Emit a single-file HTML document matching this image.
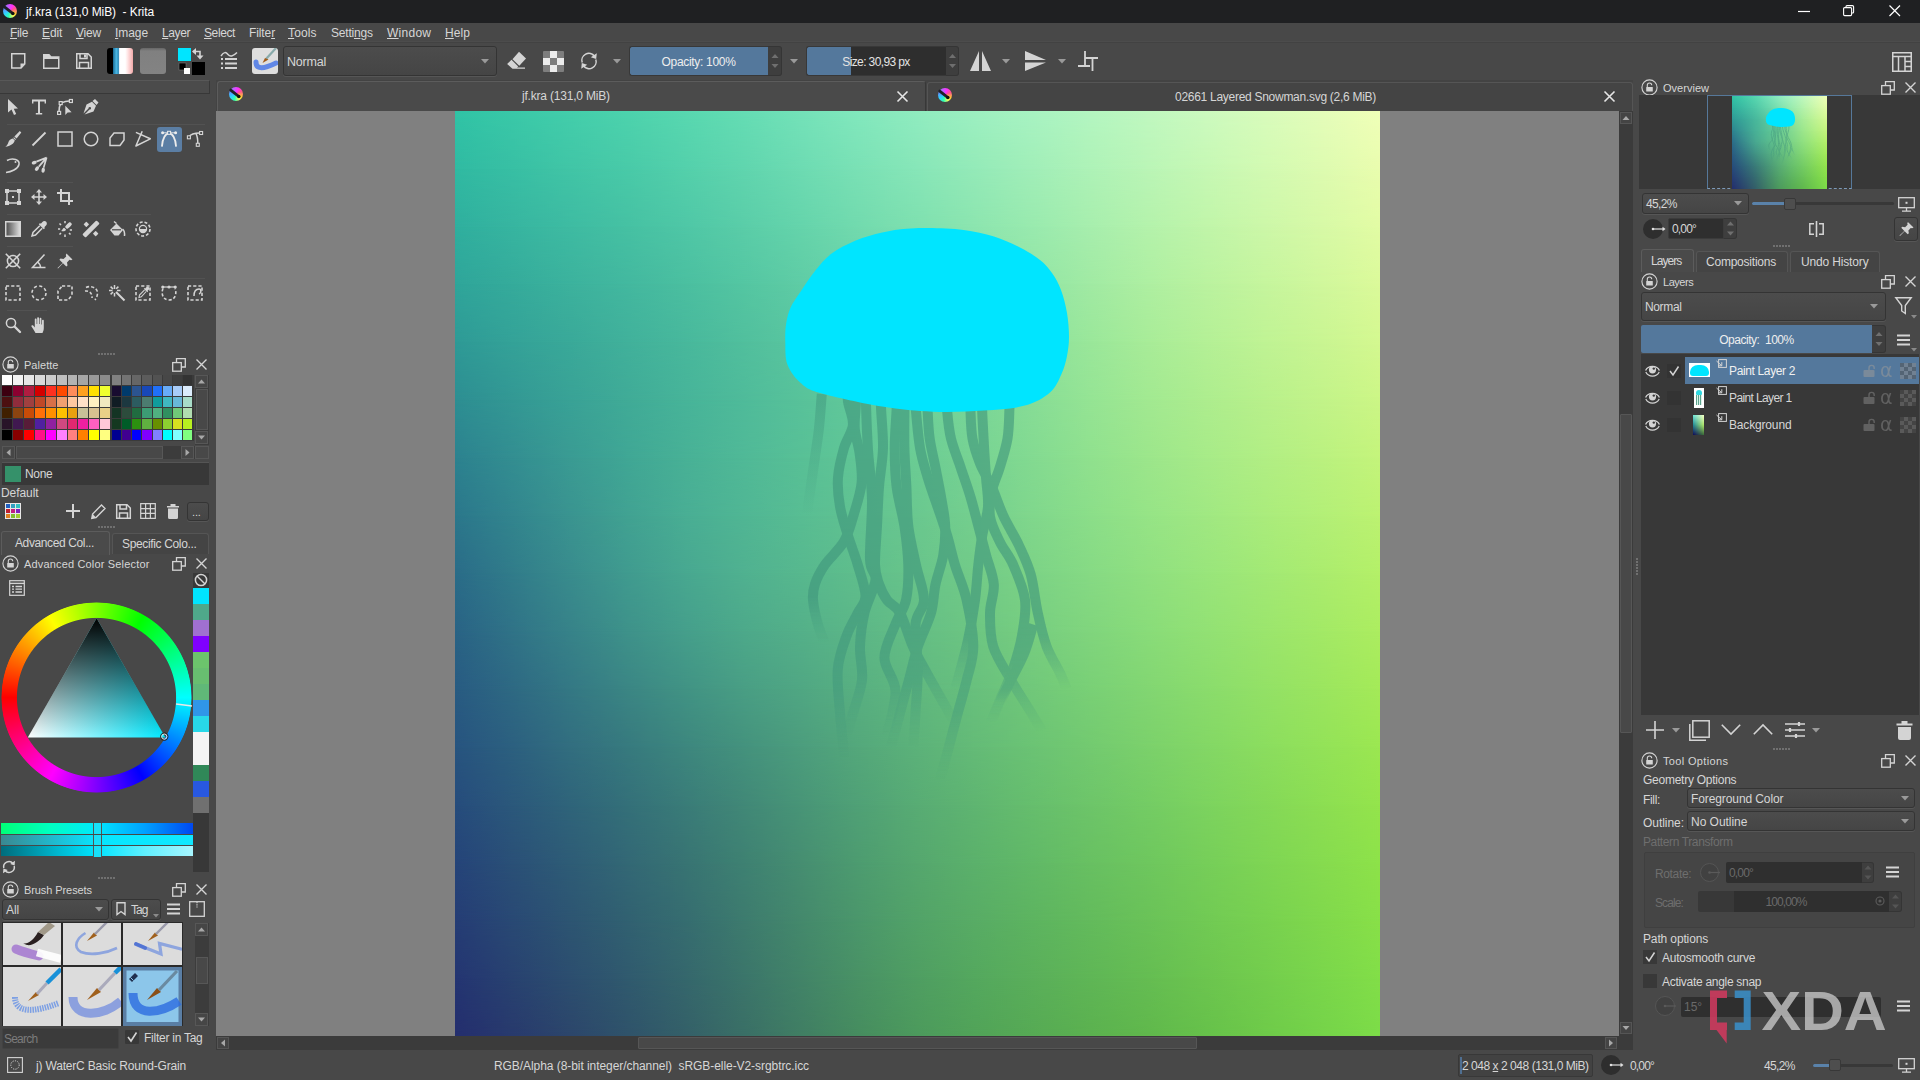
<!DOCTYPE html><html><head><meta charset="utf-8"><title>jf.kra (131,0 MiB) - Krita</title><style>
*{box-sizing:border-box;margin:0;padding:0}
html,body{width:1920px;height:1080px;overflow:hidden;background:#484848}
body{position:relative;font-family:"Liberation Sans",sans-serif;font-size:12px;color:#d6d6d6;letter-spacing:-0.15px}
.a{position:absolute}
.t{position:absolute;white-space:nowrap;line-height:14px}
u{text-decoration:underline;text-underline-offset:1px}
svg{position:absolute;overflow:visible}
.in{position:absolute;background:#2f2f2f;border:1px solid #3b3b3b;border-radius:2px}
.cb{position:absolute;background:linear-gradient(#4c4c4c,#454545);border:1px solid #343434;border-radius:3px;box-shadow:0 1px 0 #565656}
.dim{color:#7a7a7a}
.s{fill:none;stroke:#d4d4d4;stroke-width:1.5}
.f{fill:#d4d4d4;stroke:none}
</style></head><body>
<div class="a" style="left:0px;top:0px;width:1920px;height:23px;background:#1f2022;"></div>
<div class="a" style="left:3px;top:4px;width:14px;height:14px;border-radius:50%;background:conic-gradient(from 20deg,#ff30ff,#ff5090 12%,#ffd030 28%,#f0ff60 36%,#30ffb0 48%,#30d0ff 62%,#6090ff 75%,#c060ff 88%,#ff30ff)"></div>
<svg style="left:3px;top:4px;" width="14" height="14" viewBox="0 0 14 14"><path d="M1.7 3.1 L8.7 8.7" stroke="#202028" stroke-width="2.8" stroke-linecap="round"/><circle cx="9.8" cy="9.5" r="1.8" fill="#111"/></svg>
<div class="t" style="left:26px;top:5px;color:#fff;;letter-spacing:-0.075px;">jf.kra (131,0 MiB)&nbsp; - Krita</div>
<svg style="left:1798px;top:4px;" width="14" height="14" viewBox="0 0 14 14"><path d="M0 7.5 H12" stroke="#fff" stroke-width="1.2"/></svg>
<svg style="left:1843px;top:5px;" width="12" height="12" viewBox="0 0 12 12"><rect x="0.6" y="2.6" width="8" height="8" rx="1" fill="none" stroke="#fff" stroke-width="1.1"/><path d="M3 2.4 V1.6 Q3 0.6 4 0.6 H9.4 Q10.6 0.6 10.6 1.8 V7 Q10.6 8 9.6 8 H9" fill="none" stroke="#fff" stroke-width="1.1"/></svg>
<svg style="left:1889px;top:5px;" width="12" height="12" viewBox="0 0 12 12"><path d="M0.5 0.5 L11 11 M11 0.5 L0.5 11" stroke="#fff" stroke-width="1.2" fill="none"/></svg>
<div class="t" style="left:10px;top:26px;;letter-spacing:-0.340px;"><u>F</u>ile</div>
<div class="t" style="left:42px;top:26px;;letter-spacing:-0.101px;"><u>E</u>dit</div>
<div class="t" style="left:76px;top:26px;;letter-spacing:-0.203px;"><u>V</u>iew</div>
<div class="t" style="left:115px;top:26px;;letter-spacing:-0.075px;"><u>I</u>mage</div>
<div class="t" style="left:162px;top:26px;;letter-spacing:-0.406px;"><u>L</u>ayer</div>
<div class="t" style="left:204px;top:26px;;letter-spacing:-0.396px;"><u>S</u>elect</div>
<div class="t" style="left:249px;top:26px;;letter-spacing:-0.112px;">Filte<u>r</u></div>
<div class="t" style="left:288px;top:26px;;letter-spacing:0.137px;"><u>T</u>ools</div>
<div class="t" style="left:331px;top:26px;;letter-spacing:-0.211px;">Setti<u>n</u>gs</div>
<div class="t" style="left:387px;top:26px;;letter-spacing:0.269px;"><u>W</u>indow</div>
<div class="t" style="left:445px;top:26px;;letter-spacing:0.078px;"><u>H</u>elp</div>
<svg style="left:11px;top:53px;" width="15" height="16" viewBox="0 0 15 16"><path class="s" d="M0.75 0.75 H13.75 V11 L10 15 H0.75 Z"/><path class="f" d="M9.5 10.5 H14 L9.5 15.2Z"/></svg>
<svg style="left:43px;top:54px;" width="17" height="15" viewBox="0 0 17 15"><path class="s" d="M0.75 14.25 V0.75 H6 L8 3 H15.75 V14.25 Z"/><path class="f" d="M0.75 0.75 H6 L8 3 H15.75 V5 H0.75Z"/></svg>
<svg style="left:76px;top:53px;" width="16" height="16" viewBox="0 0 16 16"><path class="s" d="M0.75 0.75 H12 L15.25 4 V15.25 H0.75 Z"/><path class="s" d="M4 0.75 V5.5 H11 V0.75 M3.5 15 V9.5 H12.5 V15"/><rect class="f" x="8" y="1.5" width="2" height="3"/></svg>
<div class="a" style="left:107px;top:48px;width:26px;height:26px;background:linear-gradient(90deg,#000 0,#000 22%,#1d6f9a 24%,#49b6e2 36%,#2f8dbb 44%,#e8f2fa 48%,#fff 52%,#fff 70%,#ffe4e4 80%,#f2a8a8 100%);border-radius:3px"></div>
<div class="a" style="left:140px;top:48px;width:26px;height:26px;background:#7f7f7f;border-radius:3px;background-image:linear-gradient(#666 0,#808080 3px,#838383 100%)"></div>
<div class="a" style="left:178px;top:48px;width:13px;height:13px;background:#00e5ff;"></div>
<div class="a" style="left:192px;top:62px;width:13px;height:13px;background:#000;"></div>
<svg style="left:179px;top:63px;" width="12" height="12" viewBox="0 0 12 12"><rect x="0" y="0" width="7" height="7" fill="#000" stroke="#777" stroke-width="0.6"/><rect x="5" y="5" width="6" height="6" fill="#fff"/></svg>
<svg style="left:192px;top:48px;" width="12" height="12" viewBox="0 0 12 12"><path d="M1 3.5 H8 V8" fill="none" stroke="#d4d4d4" stroke-width="1.6"/><path class="f" d="M4 0 L0 3.5 L4 7Z"/><path class="f" d="M4.5 7.5 H11.5 L8 11.5Z"/></svg>
<svg style="left:220px;top:52px;top:51px" width="18" height="18" viewBox="0 0 18 18"><path class="s" d="M1 5 C4 0.5 6 1 8 3.5 S13 5.5 17 1.5" stroke-width="1.8"/><path d="M5 8 H17 M5 12.5 H17 M5 17 H17" stroke="#d4d4d4" stroke-width="1.8"/><path d="M1 8 H3 M1 12.5 H3 M1 17 H3" stroke="#d4d4d4" stroke-width="1.8"/></svg>
<div class="a" style="left:252px;top:48px;width:26px;height:26px;background:#dedede;border-radius:3px;overflow:hidden"><svg style="left:0;top:0" width="26" height="26" viewBox="0 0 26 26"><path d="M4 14 C4 22 12 21 24 15" fill="none" stroke="#4a78e8" stroke-width="5" stroke-linecap="round" opacity=".85"/><path d="M14 11 L24 0" stroke="#8aa" stroke-width="2.2"/><path d="M10.5 15 L13 10 L16.5 11.5 Z" fill="#a05a18"/></svg></div>
<div class="cb" style="left:283px;top:46px;width:214px;height:30px;"></div>
<div class="t" style="left:287px;top:55px;font-size:12.5px;letter-spacing:-0.183px;">Normal</div>
<svg style="left:481px;top:59px;" width="8" height="5" viewBox="0 0 8 5"><path d="M0 0 H8 L4 4.5Z" fill="#9a9a9a"/></svg>
<svg style="left:507px;top:51px;" width="20" height="19" viewBox="0 0 20 19"><path class="f" d="M12 0.8 L19 7.6 L12.3 14.7 L5.5 8.2Z"/><path class="f" d="M3.2 10 L0.1 13 L5.5 17.7 H18 V16.5 H10 L11.2 15.6 L4.5 8.8Z"/></svg>
<div class="a" style="left:543px;top:51px;width:21px;height:21px;background:#7e7e7e;border-radius:1px"></div>
<div class="a" style="left:543px;top:58px;width:7px;height:7px;background:#ececec;"></div>
<div class="a" style="left:550px;top:51px;width:7px;height:7px;background:#ececec;"></div>
<div class="a" style="left:550px;top:65px;width:7px;height:7px;background:#ececec;"></div>
<div class="a" style="left:557px;top:58px;width:7px;height:7px;background:#ececec;"></div>
<svg style="left:580px;top:52px;" width="18" height="18" viewBox="0 0 18 18"><path class="s" d="M2.2 10.5 A7 7 0 0 1 14.5 4.2 M15.8 7.5 A7 7 0 0 1 3.5 13.8" stroke-width="1.7"/><path class="f" d="M16.8 1.2 L16.2 7 L10.8 5.2Z M1.2 16.8 L1.8 11 L7.2 12.8Z"/></svg>
<svg style="left:613px;top:59px;" width="8" height="5" viewBox="0 0 8 5"><path d="M0 0 H8 L4 4.5Z" fill="#9a9a9a"/></svg>
<div class="a" style="left:629px;top:46px;width:139px;height:30px;background:#54789c;border:1px solid #383838;border-right:none;border-radius:3px 0 0 3px"></div>
<div class="t" style="left:629px;top:55px;width:139px;text-align:center;color:#eee;letter-spacing:-0.311px;">Opacity: 100%</div>
<div class="a" style="left:768px;top:46px;width:14px;height:30px;background:#3e3e3e;border:1px solid #353535;border-left:none;border-radius:0 3px 3px 0"></div>
<svg style="left:768px;top:46px;" width="14" height="30" viewBox="0 0 14 30"><path d="M3.5 12.0 H10.5 L7.0 8.0Z M3.5 18.0 H10.5 L7.0 22.0Z" fill="#6f6f6f"/></svg>
<svg style="left:790px;top:59px;" width="8" height="5" viewBox="0 0 8 5"><path d="M0 0 H8 L4 4.5Z" fill="#9a9a9a"/></svg>
<div class="a" style="left:806px;top:46px;width:140px;height:30px;background:linear-gradient(90deg,#54789c 0,#54789c 44px,#2e2e2e 44px);border:1px solid #383838;border-right:none;border-radius:3px 0 0 3px"></div>
<div class="t" style="left:806px;top:55px;width:140px;text-align:center;color:#e4e4e4;letter-spacing:-0.612px;">Size: 30,93 px</div>
<div class="a" style="left:946px;top:46px;width:13px;height:30px;background:#3e3e3e;border:1px solid #353535;border-left:none;border-radius:0 3px 3px 0"></div>
<svg style="left:946px;top:46px;" width="13" height="30" viewBox="0 0 13 30"><path d="M3.0 12.0 H10.0 L6.5 8.0Z M3.0 18.0 H10.0 L6.5 22.0Z" fill="#6f6f6f"/></svg>
<svg style="left:970px;top:51px;" width="21" height="20" viewBox="0 0 21 20"><path class="f" d="M9 0 V20 H0Z M12 0 V20 H21Z"/></svg>
<svg style="left:1002px;top:59px;" width="8" height="5" viewBox="0 0 8 5"><path d="M0 0 H8 L4 4.5Z" fill="#9a9a9a"/></svg>
<svg style="left:1025px;top:51px;" width="21" height="20" viewBox="0 0 21 20"><path class="f" d="M0 0 V9 H21Z M0 20 V11.5 H21Z"/></svg>
<svg style="left:1058px;top:59px;" width="8" height="5" viewBox="0 0 8 5"><path d="M0 0 H8 L4 4.5Z" fill="#9a9a9a"/></svg>
<svg style="left:1078px;top:52px;" width="20" height="19" viewBox="0 0 20 19"><path d="M7 -1 V14.8 M6.1 6 H20 M0 14 H12 M14.5 6 V19" fill="none" stroke="#d4d4d4" stroke-width="1.8"/></svg>
<svg style="left:1892px;top:52px;" width="20" height="20" viewBox="0 0 20 20"><rect class="s" x="0.75" y="0.75" width="18.5" height="18.5"/><path class="s" d="M0.75 4.5 H19.25 M6.5 4.5 V19.25 M13 4.5 V19.25 M13 9.5 H19.25 M13 14.5 H19.25" stroke-width="1.3"/></svg>
<div class="a" style="left:0px;top:41px;width:1920px;height:1px;background:#4c4c4c;"></div>
<div class="a" style="left:0px;top:42px;width:1920px;height:1px;background:#424242;"></div>
<div class="a" style="left:216px;top:80px;width:1417px;height:31px;background:#434343;"></div>
<div class="a" style="left:217px;top:81px;width:709px;height:30px;background:#4a4a4a;border:1px solid #5c5c5c;border-bottom:none;border-right-color:#383838;border-radius:3px 3px 0 0"></div>
<div class="a" style="left:229px;top:87px;width:14px;height:14px;border-radius:50%;background:conic-gradient(from 20deg,#ff30ff,#ff5090 12%,#ffd030 28%,#f0ff60 36%,#30ffb0 48%,#30d0ff 62%,#6090ff 75%,#c060ff 88%,#ff30ff)"></div>
<svg style="left:229px;top:87px;" width="14" height="14" viewBox="0 0 14 14"><path d="M1.7 3.1 L8.7 8.7" stroke="#202028" stroke-width="2.8" stroke-linecap="round"/><circle cx="9.8" cy="9.5" r="1.8" fill="#111"/></svg>
<div class="t" style="left:522px;top:89px;;letter-spacing:-0.198px;">jf.kra (131,0 MiB)</div>
<svg style="left:897px;top:91px;" width="11" height="11" viewBox="0 0 11 11"><path d="M0.5 0.5 L10.5 10.5 M10.5 0.5 L0.5 10.5" stroke="#e6e6e6" stroke-width="1.6" fill="none"/></svg>
<div class="a" style="left:927px;top:82px;width:706px;height:29px;background:#444;border:1px solid #555;border-bottom:none;border-radius:3px 3px 0 0"></div>
<div class="a" style="left:938px;top:88px;width:14px;height:14px;border-radius:50%;background:conic-gradient(from 20deg,#ff30ff,#ff5090 12%,#ffd030 28%,#f0ff60 36%,#30ffb0 48%,#30d0ff 62%,#6090ff 75%,#c060ff 88%,#ff30ff)"></div>
<svg style="left:938px;top:88px;" width="14" height="14" viewBox="0 0 14 14"><path d="M1.7 3.1 L8.7 8.7" stroke="#202028" stroke-width="2.8" stroke-linecap="round"/><circle cx="9.8" cy="9.5" r="1.8" fill="#111"/></svg>
<div class="t" style="left:1175px;top:90px;;letter-spacing:-0.279px;">02661 Layered Snowman.svg (2,6 MiB)</div>
<svg style="left:1604px;top:91px;" width="11" height="11" viewBox="0 0 11 11"><path d="M0.5 0.5 L10.5 10.5 M10.5 0.5 L0.5 10.5" stroke="#e6e6e6" stroke-width="1.6" fill="none"/></svg>
<div class="a" style="left:216px;top:111px;width:1404px;height:925px;background:#808080;"></div>
<div class="a" style="left:455px;top:111px;width:925px;height:925px;overflow:hidden">
<div class="a" style="left:0;top:0px;width:925px;height:58px;background:linear-gradient(90deg,#30c4a6,#3ac9a8,#43ceab,#4dd3ad,#58d8b0,#65ddb4,#74e2b9,#82e8bd,#90ecc0,#9df0c1,#a8f3c2,#b4f6c1,#c0f8c0,#ccfabf,#d8fcbc,#e4fdba,#f0ffb8)"></div>
<div class="a" style="left:0;top:0px;width:925px;height:58px;background:linear-gradient(90deg,#30baa2,#38bfa4,#41c5a6,#49caa8,#54d0ab,#60d5ae,#6ddbb2,#7ae1b5,#87e6b8,#94eab8,#a1eeb8,#aef2b7,#baf5b6,#c6f8b4,#d2fab2,#ddfbb0,#e9fdae);-webkit-mask-image:linear-gradient(to bottom,transparent,#000);mask-image:linear-gradient(to bottom,transparent,#000)"></div>
<div class="a" style="left:0;top:58px;width:925px;height:58px;background:linear-gradient(90deg,#30baa2,#38bfa4,#41c5a6,#49caa8,#54d0ab,#60d5ae,#6ddbb2,#7ae1b5,#87e6b8,#94eab8,#a1eeb8,#aef2b7,#baf5b6,#c6f8b4,#d2fab2,#ddfbb0,#e9fdae)"></div>
<div class="a" style="left:0;top:58px;width:925px;height:58px;background:linear-gradient(90deg,#2faf9e,#37b5a0,#3ebba2,#46c1a3,#4fc7a6,#5acda8,#65d4ab,#72daae,#7ee0af,#8ce5af,#99eaae,#a7eead,#b4f2ab,#c0f5a9,#ccf7a8,#d7f9a6,#e2fca4);-webkit-mask-image:linear-gradient(to bottom,transparent,#000);mask-image:linear-gradient(to bottom,transparent,#000)"></div>
<div class="a" style="left:0;top:116px;width:925px;height:57px;background:linear-gradient(90deg,#2faf9e,#37b5a0,#3ebba2,#46c1a3,#4fc7a6,#5acda8,#65d4ab,#72daae,#7ee0af,#8ce5af,#99eaae,#a7eead,#b4f2ab,#c0f5a9,#ccf7a8,#d7f9a6,#e2fca4)"></div>
<div class="a" style="left:0;top:116px;width:925px;height:57px;background:linear-gradient(90deg,#2fa59a,#35ab9b,#3cb29d,#43b89f,#4bbfa0,#54c6a2,#5fcca5,#6ad3a7,#76d9a7,#84dfa7,#92e5a5,#a1eaa3,#aeefa1,#baf29f,#c5f59d,#d0f79c,#dbfa9a);-webkit-mask-image:linear-gradient(to bottom,transparent,#000);mask-image:linear-gradient(to bottom,transparent,#000)"></div>
<div class="a" style="left:0;top:173px;width:925px;height:58px;background:linear-gradient(90deg,#2fa59a,#35ab9b,#3cb29d,#43b89f,#4bbfa0,#54c6a2,#5fcca5,#6ad3a7,#76d9a7,#84dfa7,#92e5a5,#a1eaa3,#aeefa1,#baf29f,#c5f59d,#d0f79c,#dbfa9a)"></div>
<div class="a" style="left:0;top:173px;width:925px;height:58px;background:linear-gradient(90deg,#2e9a96,#34a298,#3aa999,#41b19b,#48b89c,#51bf9d,#5ac69f,#65cda0,#70d4a0,#7ddb9f,#8ce19d,#9ae79a,#a8ec98,#b4f096,#bff394,#c9f592,#d4f890);-webkit-mask-image:linear-gradient(to bottom,transparent,#000);mask-image:linear-gradient(to bottom,transparent,#000)"></div>
<div class="a" style="left:0;top:231px;width:925px;height:58px;background:linear-gradient(90deg,#2e9a96,#34a298,#3aa999,#41b19b,#48b89c,#51bf9d,#5ac69f,#65cda0,#70d4a0,#7ddb9f,#8ce19d,#9ae79a,#a8ec98,#b4f096,#bff394,#c9f592,#d4f890)"></div>
<div class="a" style="left:0;top:231px;width:925px;height:58px;background:linear-gradient(90deg,#2d8e92,#339894,#39a296,#40ab97,#47b499,#4fbb9a,#58c29a,#62c99a,#6cd09a,#79d698,#87dd96,#95e494,#a2e991,#aded8e,#b8f08b,#c2f389,#ccf686);-webkit-mask-image:linear-gradient(to bottom,transparent,#000);mask-image:linear-gradient(to bottom,transparent,#000)"></div>
<div class="a" style="left:0;top:289px;width:925px;height:58px;background:linear-gradient(90deg,#2d8e92,#339894,#39a296,#40ab97,#47b499,#4fbb9a,#58c29a,#62c99a,#6cd09a,#79d698,#87dd96,#95e494,#a2e991,#aded8e,#b8f08b,#c2f389,#ccf686)"></div>
<div class="a" style="left:0;top:289px;width:925px;height:58px;background:linear-gradient(90deg,#2c828f,#338e91,#3a9b93,#40a795,#48b196,#50b997,#58c096,#61c696,#6bcc94,#77d393,#83da91,#90e18e,#9ce68b,#a7eb88,#b1ee84,#baf17f,#c4f47b);-webkit-mask-image:linear-gradient(to bottom,transparent,#000);mask-image:linear-gradient(to bottom,transparent,#000)"></div>
<div class="a" style="left:0;top:347px;width:925px;height:58px;background:linear-gradient(90deg,#2c828f,#338e91,#3a9b93,#40a795,#48b196,#50b997,#58c096,#61c696,#6bcc94,#77d393,#83da91,#90e18e,#9ce68b,#a7eb88,#b1ee84,#baf17f,#c4f47b)"></div>
<div class="a" style="left:0;top:347px;width:925px;height:58px;background:linear-gradient(90deg,#2b778b,#32858e,#3a9490,#41a292,#49ae94,#50b694,#58bd93,#61c291,#6ac88f,#74cf8e,#80d78c,#8bde89,#96e486,#a0e882,#aaec7c,#b3ef77,#bcf271);-webkit-mask-image:linear-gradient(to bottom,transparent,#000);mask-image:linear-gradient(to bottom,transparent,#000)"></div>
<div class="a" style="left:0;top:405px;width:925px;height:57px;background:linear-gradient(90deg,#2b778b,#32858e,#3a9490,#41a292,#49ae94,#50b694,#58bd93,#61c291,#6ac88f,#74cf8e,#80d78c,#8bde89,#96e486,#a0e882,#aaec7c,#b3ef77,#bcf271)"></div>
<div class="a" style="left:0;top:405px;width:925px;height:57px;background:linear-gradient(90deg,#2a6c88,#317c8a,#398c8d,#409b8f,#48a890,#50b190,#57b88e,#5fbe8c,#68c48a,#72cb88,#7cd386,#86da84,#90e080,#99e57b,#a2e975,#abec6e,#b4f068);-webkit-mask-image:linear-gradient(to bottom,transparent,#000);mask-image:linear-gradient(to bottom,transparent,#000)"></div>
<div class="a" style="left:0;top:462px;width:925px;height:58px;background:linear-gradient(90deg,#2a6c88,#317c8a,#398c8d,#409b8f,#48a890,#50b190,#57b88e,#5fbe8c,#68c48a,#72cb88,#7cd386,#86da84,#90e080,#99e57b,#a2e975,#abec6e,#b4f068)"></div>
<div class="a" style="left:0;top:462px;width:925px;height:58px;background:linear-gradient(90deg,#296385,#307387,#378389,#3e928a,#459f8b,#4da98a,#54b089,#5cb787,#64be85,#6dc682,#77ce80,#80d57d,#89dc79,#92e174,#9be56d,#a3e966,#aced60);-webkit-mask-image:linear-gradient(to bottom,transparent,#000);mask-image:linear-gradient(to bottom,transparent,#000)"></div>
<div class="a" style="left:0;top:520px;width:925px;height:58px;background:linear-gradient(90deg,#296385,#307387,#378389,#3e928a,#459f8b,#4da98a,#54b089,#5cb787,#64be85,#6dc682,#77ce80,#80d57d,#89dc79,#92e174,#9be56d,#a3e966,#aced60)"></div>
<div class="a" style="left:0;top:520px;width:925px;height:58px;background:linear-gradient(90deg,#285b82,#2e6983,#347884,#3b8684,#419384,#499e84,#50a783,#58b081,#60b87f,#68c07d,#71c87a,#79d076,#82d672,#8adc6c,#93e166,#9be55f,#a4ea58);-webkit-mask-image:linear-gradient(to bottom,transparent,#000);mask-image:linear-gradient(to bottom,transparent,#000)"></div>
<div class="a" style="left:0;top:578px;width:925px;height:58px;background:linear-gradient(90deg,#285b82,#2e6983,#347884,#3b8684,#419384,#499e84,#50a783,#58b081,#60b87f,#68c07d,#71c87a,#79d076,#82d672,#8adc6c,#93e166,#9be55f,#a4ea58)"></div>
<div class="a" style="left:0;top:578px;width:925px;height:58px;background:linear-gradient(90deg,#27547f,#2c607f,#326e7f,#377a7e,#3d877e,#44927d,#4c9d7d,#54a87b,#5cb27a,#64bb77,#6bc374,#73ca70,#7bd16b,#83d765,#8bdd5f,#93e258,#9be751);-webkit-mask-image:linear-gradient(to bottom,transparent,#000);mask-image:linear-gradient(to bottom,transparent,#000)"></div>
<div class="a" style="left:0;top:636px;width:925px;height:58px;background:linear-gradient(90deg,#27547f,#2c607f,#326e7f,#377a7e,#3d877e,#44927d,#4c9d7d,#54a87b,#5cb27a,#64bb77,#6bc374,#73ca70,#7bd16b,#83d765,#8bdd5f,#93e258,#9be751)"></div>
<div class="a" style="left:0;top:636px;width:925px;height:58px;background:linear-gradient(90deg,#264c7c,#2b587b,#2f647a,#347079,#3a7c78,#418877,#489577,#50a176,#58ac74,#5fb571,#66be6d,#6dc569,#74cc64,#7cd35f,#84d858,#8cde52,#94e44c);-webkit-mask-image:linear-gradient(to bottom,transparent,#000);mask-image:linear-gradient(to bottom,transparent,#000)"></div>
<div class="a" style="left:0;top:694px;width:925px;height:58px;background:linear-gradient(90deg,#264c7c,#2b587b,#2f647a,#347079,#3a7c78,#418877,#489577,#50a176,#58ac74,#5fb571,#66be6d,#6dc569,#74cc64,#7cd35f,#84d858,#8cde52,#94e44c)"></div>
<div class="a" style="left:0;top:694px;width:925px;height:58px;background:linear-gradient(90deg,#254479,#2a5077,#2e5c76,#336875,#387473,#3e8172,#468e71,#4d9c70,#55a76e,#5bb16b,#61b967,#68c062,#6ec75e,#76ce59,#7ed554,#86db4f,#8de249);-webkit-mask-image:linear-gradient(to bottom,transparent,#000);mask-image:linear-gradient(to bottom,transparent,#000)"></div>
<div class="a" style="left:0;top:752px;width:925px;height:57px;background:linear-gradient(90deg,#254479,#2a5077,#2e5c76,#336875,#387473,#3e8172,#468e71,#4d9c70,#55a76e,#5bb16b,#61b967,#68c062,#6ec75e,#76ce59,#7ed554,#86db4f,#8de249)"></div>
<div class="a" style="left:0;top:752px;width:925px;height:57px;background:linear-gradient(90deg,#253d75,#294974,#2d5572,#316171,#366d70,#3d7b6e,#44896c,#4b976b,#52a368,#58ac65,#5db460,#63bb5c,#6ac258,#71ca54,#78d150,#80d84c,#88e048);-webkit-mask-image:linear-gradient(to bottom,transparent,#000);mask-image:linear-gradient(to bottom,transparent,#000)"></div>
<div class="a" style="left:0;top:809px;width:925px;height:58px;background:linear-gradient(90deg,#253d75,#294974,#2d5572,#316171,#366d70,#3d7b6e,#44896c,#4b976b,#52a368,#58ac65,#5db460,#63bb5c,#6ac258,#71ca54,#78d150,#80d84c,#88e048)"></div>
<div class="a" style="left:0;top:809px;width:925px;height:58px;background:linear-gradient(90deg,#243572,#284270,#2c4e6f,#305a6e,#35676c,#3b756a,#428468,#499265,#4f9e62,#54a85e,#5aaf5a,#5fb656,#65bd52,#6cc54f,#73cd4d,#7ad64b,#82de48);-webkit-mask-image:linear-gradient(to bottom,transparent,#000);mask-image:linear-gradient(to bottom,transparent,#000)"></div>
<div class="a" style="left:0;top:867px;width:925px;height:58px;background:linear-gradient(90deg,#243572,#284270,#2c4e6f,#305a6e,#35676c,#3b756a,#428468,#499265,#4f9e62,#54a85e,#5aaf5a,#5fb656,#65bd52,#6cc54f,#73cd4d,#7ad64b,#82de48)"></div>
<div class="a" style="left:0;top:867px;width:925px;height:58px;background:linear-gradient(90deg,#242e6e,#283a6d,#2c466b,#2f536a,#346068,#3a6f66,#407e63,#468d5f,#4c9a5c,#51a358,#56aa54,#5bb14f,#60b84c,#66c14a,#6eca49,#75d349,#7cdc48);-webkit-mask-image:linear-gradient(to bottom,transparent,#000);mask-image:linear-gradient(to bottom,transparent,#000)"></div>
<svg style="left:0;top:0" width="925" height="925" viewBox="0 0 925 925">
<defs><linearGradient id="tg0" gradientUnits="userSpaceOnUse" x1="0" y1="486" x2="0" y2="531"><stop offset="0" stop-color="#3f947c"/><stop offset="1" stop-color="#3f947c" stop-opacity="0"/></linearGradient><linearGradient id="tg1" gradientUnits="userSpaceOnUse" x1="0" y1="580" x2="0" y2="647"><stop offset="0" stop-color="#3f947c"/><stop offset="1" stop-color="#3f947c" stop-opacity="0"/></linearGradient><linearGradient id="tg2" gradientUnits="userSpaceOnUse" x1="0" y1="562" x2="0" y2="624"><stop offset="0" stop-color="#3f947c"/><stop offset="1" stop-color="#3f947c" stop-opacity="0"/></linearGradient><linearGradient id="tg3" gradientUnits="userSpaceOnUse" x1="0" y1="554" x2="0" y2="613"><stop offset="0" stop-color="#3f947c"/><stop offset="1" stop-color="#3f947c" stop-opacity="0"/></linearGradient><linearGradient id="tg4" gradientUnits="userSpaceOnUse" x1="0" y1="563" x2="0" y2="624"><stop offset="0" stop-color="#3f947c"/><stop offset="1" stop-color="#3f947c" stop-opacity="0"/></linearGradient><linearGradient id="tg5" gradientUnits="userSpaceOnUse" x1="0" y1="572" x2="0" y2="636"><stop offset="0" stop-color="#3f947c"/><stop offset="1" stop-color="#3f947c" stop-opacity="0"/></linearGradient><linearGradient id="tg6" gradientUnits="userSpaceOnUse" x1="0" y1="573" x2="0" y2="636"><stop offset="0" stop-color="#3f947c"/><stop offset="1" stop-color="#3f947c" stop-opacity="0"/></linearGradient><linearGradient id="tg7" gradientUnits="userSpaceOnUse" x1="0" y1="600" x2="0" y2="669"><stop offset="0" stop-color="#3f947c"/><stop offset="1" stop-color="#3f947c" stop-opacity="0"/></linearGradient><linearGradient id="tg8" gradientUnits="userSpaceOnUse" x1="0" y1="560" x2="0" y2="620"><stop offset="0" stop-color="#3f947c"/><stop offset="1" stop-color="#3f947c" stop-opacity="0"/></linearGradient><linearGradient id="tg9" gradientUnits="userSpaceOnUse" x1="0" y1="526" x2="0" y2="578"><stop offset="0" stop-color="#3f947c"/><stop offset="1" stop-color="#3f947c" stop-opacity="0"/></linearGradient><linearGradient id="tg10" gradientUnits="userSpaceOnUse" x1="0" y1="552" x2="0" y2="611"><stop offset="0" stop-color="#3f947c"/><stop offset="1" stop-color="#3f947c" stop-opacity="0"/></linearGradient><linearGradient id="tg11" gradientUnits="userSpaceOnUse" x1="0" y1="526" x2="0" y2="579"><stop offset="0" stop-color="#3f947c"/><stop offset="1" stop-color="#3f947c" stop-opacity="0"/></linearGradient><linearGradient id="tg12" gradientUnits="userSpaceOnUse" x1="0" y1="577" x2="0" y2="591"><stop offset="0" stop-color="#3f947c"/><stop offset="1" stop-color="#3f947c" stop-opacity="0"/></linearGradient><linearGradient id="tfade" gradientUnits="userSpaceOnUse" x1="0" y1="500" x2="0" y2="730"><stop offset="0" stop-color="#fff"/><stop offset="0.55" stop-color="#999"/><stop offset="1" stop-color="#000"/></linearGradient>
<mask id="tmask" maskUnits="userSpaceOnUse" x="0" y="0" width="925" height="925"><rect x="0" y="0" width="925" height="925" fill="url(#tfade)"/></mask></defs>
<g mask="url(#tmask)"><g opacity="0.6" fill="none" stroke-width="10" stroke-linecap="butt"><path d="M400.8 280.6C400.8 282.9 401.0 288.4 400.8 294.6C400.6 300.8 399.1 309.9 399.8 318.0C400.4 326.1 403.6 334.0 404.7 343.0C405.8 352.0 407.6 362.0 406.6 372.0C405.6 382.0 401.8 393.2 398.9 403.0C396.0 412.8 393.9 422.1 389.0 430.6C384.1 439.1 374.5 446.9 369.7 454.0C364.9 461.1 361.9 467.2 360.0 473.0C358.1 478.8 357.5 482.3 358.0 489.0C358.5 495.7 360.9 506.0 362.8 513.0C364.7 520.0 368.3 528.0 369.4 531.0" stroke="url(#tg0)"/><path d="M393.0 276.7C393.0 279.0 392.2 284.5 393.0 290.7C393.8 296.9 398.6 306.3 397.9 314.0C397.2 321.7 391.5 328.2 389.0 337.0C386.5 345.8 383.7 356.7 383.0 366.5C382.3 376.3 383.3 385.9 385.0 395.6C386.7 405.3 390.0 415.1 393.0 424.8C396.0 434.5 399.9 444.0 402.8 454.0C405.7 464.0 410.5 477.0 410.5 485.0C410.5 493.0 405.9 495.4 402.8 502.0C399.7 508.6 395.0 515.2 391.7 524.5C388.4 533.8 383.9 545.1 382.8 558.0C381.7 570.9 383.9 587.2 385.0 602.0C386.1 616.8 388.7 639.3 389.4 646.8" stroke="url(#tg1)"/><path d="M411.0 280.0C411.0 282.3 410.7 284.2 411.0 294.0C411.3 303.8 412.0 323.2 413.0 339.0C414.0 354.8 416.7 370.7 417.0 389.0C417.3 407.3 414.4 435.7 415.0 449.0C415.6 462.3 421.4 460.2 420.5 469.0C419.6 477.8 412.0 490.9 409.4 502.0C406.8 513.1 405.4 524.5 405.0 535.7C404.6 546.9 408.2 558.0 407.0 569.0C405.8 580.0 400.6 592.8 398.0 602.0C395.4 611.2 392.8 620.8 391.7 624.5" stroke="url(#tg2)"/><path d="M426.0 282.5C426.0 284.8 425.7 287.4 426.0 296.5C426.3 305.6 428.3 323.8 428.0 337.0C427.7 350.2 425.0 363.0 424.0 376.0C423.0 389.0 422.7 402.0 422.0 415.0C421.3 428.0 419.7 444.3 420.0 454.0C420.3 463.7 422.0 467.2 424.0 473.0C426.0 478.8 428.5 484.2 432.0 489.0C435.5 493.8 440.7 494.2 445.0 502.0C449.3 509.8 453.6 525.7 458.0 535.7C462.4 545.7 466.5 552.4 471.7 562.0C476.9 571.6 484.6 584.8 489.4 593.4C494.2 602.0 498.6 610.1 500.5 613.4" stroke="url(#tg3)"/><path d="M441.6 284.4C441.6 286.7 441.9 289.6 441.6 298.4C441.3 307.2 439.7 324.1 439.7 337.0C439.7 349.9 440.0 363.0 441.6 376.0C443.2 389.0 447.4 402.0 449.4 415.0C451.3 428.0 453.0 441.7 453.3 454.0C453.6 466.3 453.1 479.2 451.0 489.0C448.9 498.8 444.1 503.4 440.5 513.0C436.9 522.6 429.4 535.6 429.4 546.8C429.4 558.0 440.1 567.0 440.5 580.0C440.9 593.0 433.2 617.1 431.7 624.5" stroke="url(#tg4)"/><path d="M449.4 284.4C449.4 286.7 449.4 289.6 449.4 298.4C449.4 307.2 449.1 324.1 449.4 337.0C449.7 349.9 450.8 363.0 451.4 376.0C452.0 389.0 451.7 402.0 453.3 415.0C454.9 428.0 458.4 441.7 461.0 454.0C463.6 466.3 469.1 479.2 469.0 489.0C468.9 498.8 461.5 501.5 460.5 513.0C459.5 524.5 462.8 543.2 462.8 558.0C462.8 572.8 461.2 589.0 460.5 602.0C459.8 615.0 458.7 630.1 458.3 635.7" stroke="url(#tg5)"/><path d="M472.7 286.4C472.7 288.7 472.4 293.5 472.7 300.4C473.0 307.3 473.4 318.2 474.7 327.6C476.0 337.0 478.6 346.8 480.5 356.8C482.4 366.9 484.8 378.2 486.4 387.9C488.0 397.6 489.9 405.6 490.2 415.0C490.5 424.4 489.9 434.3 488.3 444.0C486.7 453.7 482.6 463.7 480.5 473.4C478.4 483.1 478.9 491.6 476.0 502.0C473.1 512.4 466.5 524.5 462.8 535.7C459.1 546.9 456.9 558.0 453.9 569.0C450.9 580.0 448.0 590.9 445.0 602.0C442.0 613.1 437.5 630.1 436.0 635.7" stroke="url(#tg6)"/><path d="M461.0 286.4C461.0 288.7 460.3 292.0 461.0 300.4C461.7 308.8 463.1 326.0 465.0 337.0C466.9 348.0 469.8 356.7 472.7 366.5C475.6 376.3 479.2 385.9 482.5 395.6C485.8 405.3 489.3 415.1 492.2 424.8C495.1 434.5 496.8 443.3 500.0 454.0C503.2 464.7 508.6 475.4 511.6 489.0C514.6 502.6 518.3 522.4 518.3 535.7C518.3 549.0 514.3 558.0 511.7 569.0C509.1 580.0 505.8 590.9 502.8 602.0C499.8 613.1 496.9 624.5 493.9 635.7C490.9 646.9 486.5 663.5 485.0 669.0" stroke="url(#tg7)"/><path d="M492.2 286.4C492.2 288.7 491.6 293.5 492.2 300.4C492.8 307.3 493.7 318.2 496.0 327.6C498.3 337.0 502.5 347.1 505.8 356.8C509.0 366.5 512.6 376.3 515.5 386.0C518.4 395.7 520.7 405.3 523.3 415.0C525.9 424.7 528.4 434.3 531.0 444.0C533.6 453.7 538.1 463.7 538.8 473.4C539.5 483.1 535.1 491.6 535.0 502.0C534.9 512.4 534.8 524.5 538.3 535.7C541.8 546.9 550.1 558.6 556.0 569.0C561.9 579.4 568.7 589.5 573.9 598.0C579.1 606.5 584.8 616.3 587.0 620.0" stroke="url(#tg8)"/><path d="M515.5 286.4C515.5 288.7 515.2 293.5 515.5 300.4C515.8 307.3 515.9 318.9 517.5 327.6C519.1 336.4 522.0 344.8 525.2 352.9C528.4 361.0 533.0 367.2 536.9 376.0C540.8 384.8 544.1 395.6 548.6 405.4C553.1 415.1 559.5 424.8 564.0 434.5C568.5 444.2 572.7 452.5 575.8 463.7C578.9 475.0 580.1 490.0 582.8 502.0C585.4 514.0 588.0 525.7 591.7 535.7C595.4 545.7 601.7 555.0 605.0 562.0C608.3 569.0 610.6 575.3 611.7 578.0" stroke="url(#tg9)"/><path d="M554.4 284.4C554.4 286.7 554.7 291.2 554.4 298.4C554.1 305.6 554.1 317.9 552.5 327.6C550.9 337.3 547.3 348.1 544.7 356.8C542.1 365.5 538.5 371.9 536.9 380.0C535.3 388.1 533.7 397.0 535.0 405.4C536.3 413.8 540.8 422.5 544.7 430.6C548.6 438.7 554.1 444.3 558.3 454.0C562.5 463.7 568.5 477.2 570.0 489.0C571.5 500.8 569.0 513.0 567.0 524.5C565.0 536.0 561.3 548.0 558.0 558.0C554.7 568.0 550.7 575.7 547.0 584.5C543.3 593.3 537.8 606.6 536.0 611.0" stroke="url(#tg10)"/><path d="M527.2 286.4C527.2 288.7 526.9 292.0 527.2 300.4C527.5 308.8 528.5 326.0 529.1 337.0C529.7 348.0 530.4 356.7 531.0 366.5C531.6 376.3 533.6 385.9 533.0 395.6C532.4 405.3 528.8 415.1 527.2 424.8C525.6 434.5 524.5 443.3 523.3 454.0C522.1 464.7 521.7 476.5 520.0 489.0C518.3 501.5 516.3 514.0 513.0 529.0C509.7 544.0 502.2 570.7 500.0 579.0" stroke="url(#tg11)"/><path d="M578.3 513.4C576.8 518.2 573.1 532.7 569.4 542.0C565.7 551.3 560.1 560.8 556.0 569.0C551.9 577.2 546.8 587.3 545.0 591.0" stroke="url(#tg12)"/></g></g>
<defs><linearGradient id="ffade" gradientUnits="userSpaceOnUse" x1="0" y1="285" x2="0" y2="405"><stop offset="0" stop-color="#3f947c" stop-opacity=".5"/><stop offset="1" stop-color="#3f947c" stop-opacity="0"/></linearGradient></defs>
<path d="M366.8 283.0C366.3 288.8 365.2 306.3 363.9 318.0C362.6 329.7 360.6 341.3 359.0 353.0C357.4 364.7 355.2 379.5 354.0 388.0C352.8 396.5 352.3 401.3 352.0 404.0" fill="none" stroke="url(#ffade)" stroke-width="10"/>
<path d="M474.0 117.0C483.5 117.2 497.9 117.6 508.7 119.0C519.5 120.4 529.6 122.6 539.0 125.5C548.4 128.4 557.3 132.6 565.0 136.5C572.7 140.4 579.7 144.8 585.0 149.0C590.3 153.2 593.5 157.0 597.0 162.0C600.5 167.0 603.5 172.3 606.0 179.0C608.5 185.7 610.7 194.2 612.0 202.0C613.3 209.8 614.0 218.8 614.0 226.0C614.0 233.2 613.2 238.8 612.0 245.0C610.8 251.2 609.3 256.9 606.5 263.0C603.7 269.1 601.1 276.2 595.0 281.5C588.9 286.8 580.8 291.6 569.8 294.6C558.8 297.6 544.3 298.6 529.0 299.6C513.7 300.6 495.0 301.4 478.0 300.7C461.0 300.0 445.7 298.7 427.0 295.6C408.3 292.5 379.6 286.2 366.0 282.3C352.4 278.4 351.3 276.8 345.7 272.0C340.1 267.2 335.1 260.6 332.5 253.8C329.9 247.0 330.5 237.8 330.3 231.0C330.1 224.2 330.2 218.7 331.1 213.0C332.0 207.3 333.1 202.2 335.5 196.8C337.9 191.4 341.6 186.6 345.7 180.5C349.8 174.4 354.9 166.3 360.0 160.0C365.1 153.7 369.5 147.9 376.3 142.8C383.1 137.7 392.2 133.1 400.7 129.5C409.2 125.9 418.7 123.4 427.2 121.4C435.7 119.4 443.9 118.4 451.7 117.7C459.5 117.0 464.5 116.8 474.0 117.0Z" fill="#00e5ff"/>
</svg>
</div>
<div class="a" style="left:1619px;top:111px;width:14px;height:925px;background:#3b3b3b;"></div>
<div class="a" style="left:1620px;top:414px;width:12px;height:319px;background:#484848;border:1px solid #565656;border-radius:1px"></div>
<svg style="left:1620px;top:112px;" width="12" height="12" viewBox="0 0 12 12"><rect x="0.5" y="0.5" width="11" height="11" fill="#444" stroke="#555"/><path d="M2.5 8 L6 4 L9.5 8Z" fill="#a8a8a8"/></svg>
<svg style="left:1620px;top:1022px;" width="12" height="12" viewBox="0 0 12 12"><rect x="0.5" y="0.5" width="11" height="11" fill="#444" stroke="#555"/><path d="M2.5 4 L6 8 L9.5 4Z" fill="#a8a8a8"/></svg>
<div class="a" style="left:216px;top:1036px;width:1417px;height:14px;background:#3b3b3b;"></div>
<div class="a" style="left:638px;top:1037px;width:559px;height:12px;background:#484848;border:1px solid #565656;border-radius:1px"></div>
<svg style="left:217px;top:1037px;" width="12" height="12" viewBox="0 0 12 12"><rect x="0.5" y="0.5" width="11" height="11" fill="#444" stroke="#555"/><path d="M8 2.5 L4 6 L8 9.5Z" fill="#a8a8a8"/></svg>
<svg style="left:1605px;top:1037px;" width="12" height="12" viewBox="0 0 12 12"><rect x="0.5" y="0.5" width="11" height="11" fill="#444" stroke="#555"/><path d="M4 2.5 L8 6 L4 9.5Z" fill="#a8a8a8"/></svg>
<div class="a" style="left:0px;top:80px;width:210px;height:14px;background:#4b4b4b;border-top:1px solid #585858;border-bottom:1px solid #383838;border-right:1px solid #383838"></div>
<div class="a" style="left:157px;top:127px;width:25px;height:25px;background:#5b7ea4;border-radius:3px"></div>
<svg style="left:5px;top:99px;" width="16" height="16" viewBox="0 0 16 16"><path class="f" d="M3 0 L3 13.5 L6.5 10.5 L9 16 L11.2 15 L8.8 9.8 L13 9.5 Z"/></svg>
<svg style="left:31px;top:99px;" width="16" height="16" viewBox="0 0 16 16"><path class="f" d="M1 0.5 H15 V4.5 H13.6 V2.4 H9 V14 H11.2 V15.5 H4.8 V14 H7 V2.4 H2.4 V4.5 H1Z"/></svg>
<svg style="left:57px;top:99px;" width="16" height="16" viewBox="0 0 16 16"><path fill="none" stroke="#d4d4d4" stroke-width="1.5" stroke-width="1.4" d="M2 12.5 C2 9 2.6 6.5 3.6 5 M5.2 3.6 C7.5 2.4 10 2.1 12.5 2"/><rect x="0.6" y="12.4" width="3" height="3" fill="#484848" stroke="#d4d4d4" stroke-width="1.2"/><rect x="2.2" y="2.6" width="3" height="3" fill="#484848" stroke="#d4d4d4" stroke-width="1.2"/><rect x="12.4" y="0.5" width="3" height="3" fill="#484848" stroke="#d4d4d4" stroke-width="1.2"/><path class="f" d="M8.3 6.8 L8.3 16 L10.6 13.6 L14.6 13.2Z"/></svg>
<svg style="left:83px;top:99px;" width="16" height="16" viewBox="0 0 16 16"><path class="f" d="M15.5 3.5 L12 0 L9.5 2 L13.5 6Z M9 2.8 L3.5 5.5 L0.5 14.5 L5.5 9.5 A1.3 1.3 0 1 1 6.5 10.5 L1.5 15.5 L10.5 12.5 L13 6.8Z"/></svg>
<svg style="left:5px;top:131px;" width="16" height="16" viewBox="0 0 16 16"><path class="f" d="M14.8 0 L16.3 1.6 L11.6 7.6 L9.4 5.6Z M9 6.2 L11 8.2 L10.2 9 L8.2 7Z M7.8 7.6 L9.8 9.6 C9 12.5 5.5 15.4 0.3 15.8 C2.4 14.2 2.8 12.8 3.4 11.2 C4.1 9.3 5.8 8 7.8 7.6Z"/></svg>
<svg style="left:31px;top:131px;" width="16" height="16" viewBox="0 0 16 16"><path d="M1.5 14.5 L14.5 1.5" stroke="#d4d4d4" stroke-width="1.8"/></svg>
<svg style="left:57px;top:131px;" width="16" height="16" viewBox="0 0 16 16"><rect x="1" y="1" width="14" height="14" fill="none" stroke="#d4d4d4" stroke-width="1.5" stroke-width="1.7"/></svg>
<svg style="left:83px;top:131px;" width="16" height="16" viewBox="0 0 16 16"><circle cx="8" cy="8" r="6.8" fill="none" stroke="#d4d4d4" stroke-width="1.5" stroke-width="1.7"/></svg>
<svg style="left:109px;top:131px;" width="16" height="16" viewBox="0 0 16 16"><path fill="none" stroke="#d4d4d4" stroke-width="1.5" stroke-width="1.7" d="M5 2 H15 V9 L11 14.5 H1 V7 Z"/></svg>
<svg style="left:135px;top:131px;" width="16" height="16" viewBox="0 0 16 16"><path fill="none" stroke="#d4d4d4" stroke-width="1.5" stroke-width="1.6" stroke-linejoin="round" d="M7.2 0.3 L0.9 15 L15.3 7.8 L0.9 1.4"/></svg>
<svg style="left:161px;top:131px;" width="16" height="16" viewBox="0 0 16 16"><path fill="none" stroke="#ececec" stroke-width="1.8" d="M0.9 15.6 C2 -2 14 -2 15.1 15.6"/><path d="M1 1.8 H15" stroke="#ececec" stroke-width="0.9"/><circle cx="1.6" cy="1.8" r="1.5" fill="#ececec"/><circle cx="14.6" cy="1.8" r="1.5" fill="#ececec"/><rect x="6.6" y="0.3" width="3" height="3" fill="#5b7ea4" stroke="#ececec" stroke-width="1"/></svg>
<svg style="left:187px;top:131px;" width="16" height="16" viewBox="0 0 16 16"><path fill="none" stroke="#d4d4d4" stroke-width="1.5" stroke-width="1.7" d="M1.7 6.1 C4 2.6 8 2 13 2 M9 2.6 C10.6 5.5 10.8 9 10.8 12.5"/><rect x="0.4" y="4.8" width="3" height="3" fill="#484848" stroke="#d4d4d4" stroke-width="1.1"/><rect x="12.6" y="0.5" width="3" height="3" fill="#484848" stroke="#d4d4d4" stroke-width="1.1"/><rect x="9.3" y="12.3" width="3" height="3" fill="#484848" stroke="#d4d4d4" stroke-width="1.1"/></svg>
<svg style="left:5px;top:157px;" width="16" height="16" viewBox="0 0 16 16"><path fill="none" stroke="#d4d4d4" stroke-width="1.5" stroke-width="1.6" d="M2 3.5 C8 0 15 3 14 7.5 C13 12 6 15 1 15.5"/><circle cx="10.5" cy="5" r="1" fill="#d4d4d4"/></svg>
<svg style="left:31px;top:157px;" width="16" height="16" viewBox="0 0 16 16"><g stroke="#d4d4d4" stroke-width="1.7"><path d="M15.6 0.6 L5.4 4.6 M15.6 0.6 L7.8 9.6 M15.6 0.6 L12.6 10.8"/></g><g fill="#d4d4d4"><ellipse cx="3.2" cy="5.6" rx="2.6" ry="1.7" transform="rotate(-22 3.2 5.6)"/><ellipse cx="6" cy="11.6" rx="2.6" ry="1.7" transform="rotate(-50 6 11.6)"/><ellipse cx="12.2" cy="13.2" rx="1.7" ry="2.6" transform="rotate(12 12.2 13.2)"/></g></svg>
<svg style="left:5px;top:189px;" width="16" height="16" viewBox="0 0 16 16"><rect x="2" y="2" width="12" height="12" fill="none" stroke="#d4d4d4" stroke-width="1.5" stroke-width="1.4"/><g fill="#d4d4d4"><rect x="0" y="0" width="4" height="4"/><rect x="12" y="0" width="4" height="4"/><rect x="0" y="12" width="4" height="4"/><rect x="12" y="12" width="4" height="4"/><rect x="7" y="7" width="2" height="2"/></g></svg>
<svg style="left:31px;top:189px;" width="16" height="16" viewBox="0 0 16 16"><path d="M8 1.5 V14.5 M1.5 8 H14.5" stroke="#d4d4d4" stroke-width="1.6"/><path class="f" d="M8 0 L11 3.5 H5Z M8 16 L11 12.5 H5Z M0 8 L3.5 5 V11Z M16 8 L12.5 5 V11Z"/></svg>
<svg style="left:57px;top:189px;" width="16" height="16" viewBox="0 0 16 16"><path d="M4 0 V12 H16 M0 4 H12 V16" fill="none" stroke="#d4d4d4" stroke-width="2"/></svg>
<svg style="left:5px;top:221px;" width="16" height="16" viewBox="0 0 16 16"><defs><linearGradient id="gi"><stop offset="0" stop-color="#4a4a4a"/><stop offset="1" stop-color="#e0e0e0"/></linearGradient></defs><rect x="0.75" y="0.75" width="14.5" height="14.5" fill="url(#gi)" stroke="#d4d4d4" stroke-width="1.5"/></svg>
<svg style="left:31px;top:221px;" width="16" height="16" viewBox="0 0 16 16"><path class="f" d="M15.2 0.8 C14 -0.4 12.3 0 11.4 1 L9.8 2.7 L9 2 L7.8 3.2 L12.8 8.2 L14 7 L13.3 6.2 L15 4.6 C16 3.6 16.2 1.8 15.2 0.8Z"/><path fill="none" stroke="#d4d4d4" stroke-width="1.5" stroke-width="1.3" d="M8.8 4.8 L2 11.5 L1 15 L4.5 14 L11.2 7.2"/></svg>
<svg style="left:57px;top:221px;" width="16" height="16" viewBox="0 0 16 16"><path class="f" d="M13 1 C11.5 1.5 9 4 8 6 L10 8 C12 7 14.5 4.5 15 3Z M7.2 6.8 C5.5 7 5.8 9 4.2 10 C6.5 11 9 9.8 9 8.4Z"/><g stroke="#d4d4d4" stroke-width="1.5"><path d="M8 0 V2.2 M1 8 H3.2 M12.8 9 H15 M8 13.5 V16 M2.5 2.5 L4 4 M13.5 13.5 L12 12 M2.5 13.5 L4 12"/></g></svg>
<svg style="left:83px;top:221px;" width="16" height="16" viewBox="0 0 16 16"><g transform="rotate(-45 8 8)"><rect x="-2" y="5.7" width="20" height="4.6" rx="1" fill="#d4d4d4"/></g><g transform="rotate(45 8 8)"><rect x="-0.6" y="6" width="4" height="4" rx="0.6" fill="#d4d4d4"/><rect x="12.6" y="6" width="4" height="4" rx="0.6" fill="#d4d4d4"/></g></svg>
<svg style="left:109px;top:221px;" width="16" height="16" viewBox="0 0 16 16"><path class="f" d="M1 9 L7.5 2.5 L14 9 L9.5 14.5 H5.5Z"/><path d="M3 8.8 H12" stroke="#484848" stroke-width="1.2"/><path fill="none" stroke="#d4d4d4" stroke-width="1.5" stroke-width="1.3" d="M7.5 2.5 L5 0.5 M13.5 8 C15.5 9.5 15.8 12 15.5 15"/></svg>
<svg style="left:135px;top:221px;" width="16" height="16" viewBox="0 0 16 16"><circle cx="8" cy="8" r="7" fill="none" stroke="#d4d4d4" stroke-width="1.6" stroke-dasharray="3 1.9"/><circle cx="8" cy="8" r="3.6" fill="none" stroke="#d4d4d4" stroke-width="1.2"/><path class="f" d="M4.4 8 A3.6 3.6 0 0 0 11.6 8Z"/></svg>
<svg style="left:5px;top:253px;" width="16" height="16" viewBox="0 0 16 16"><circle cx="8" cy="8" r="5.6" fill="none" stroke="#d4d4d4" stroke-width="1.5" stroke-width="1.4"/><path d="M0.8 0.8 L15.2 15.2 M15.2 0.8 L0.8 15.2" stroke="#d4d4d4" stroke-width="1.6"/></svg>
<svg style="left:31px;top:253px;" width="16" height="16" viewBox="0 0 16 16"><path fill="none" stroke="#d4d4d4" stroke-width="1.5" stroke-width="1.6" d="M13.5 1.5 L1.5 14.5 H14.5"/><path fill="none" stroke="#d4d4d4" stroke-width="1.5" stroke-width="1.3" d="M6.5 9 C8.5 10.5 9.5 12.5 9.5 14.5"/></svg>
<svg style="left:57px;top:253px;" width="16" height="16" viewBox="0 0 16 16"><path class="f" d="M9.5 0.5 L15.5 6.5 L14 7.2 L12.5 6.8 L10 9.5 L10.5 12.5 L9.3 13.6 L6 10.3 L1 15.5 L0.5 15 L5.7 10 L2.4 6.7 L3.5 5.5 L6.5 6 L9.2 3.5 L8.8 2Z"/></svg>
<svg style="left:5px;top:285px;" width="16" height="16" viewBox="0 0 16 16"><rect x="1" y="1" width="14" height="14" fill="none" stroke="#d4d4d4" stroke-width="1.6" stroke-dasharray="3.2 2"/></svg>
<svg style="left:31px;top:285px;" width="16" height="16" viewBox="0 0 16 16"><circle cx="8" cy="8" r="7" fill="none" stroke="#d4d4d4" stroke-width="1.6" stroke-dasharray="3.1 2.4"/></svg>
<svg style="left:57px;top:285px;" width="16" height="16" viewBox="0 0 16 16"><path d="M5 1 H15 V10 L11 15 H1 V6 Z" fill="none" stroke="#d4d4d4" stroke-width="1.6" stroke-dasharray="3.2 2"/></svg>
<svg style="left:83px;top:285px;" width="16" height="16" viewBox="0 0 16 16"><path d="M3 2.5 C8 0 14.5 3 14.5 8 C14.5 11 13 13.5 12 15" fill="none" stroke="#d4d4d4" stroke-width="1.6" stroke-dasharray="3.2 2"/><path d="M2 6 C6 5.5 9.5 8 9 13" fill="none" stroke="#d4d4d4" stroke-width="1.6" stroke-dasharray="3 2"/></svg>
<svg style="left:109px;top:285px;" width="16" height="16" viewBox="0 0 16 16"><path d="M7 7 L15.5 15.5" stroke="#d4d4d4" stroke-width="2"/><path d="M5.5 0 V4 M5.5 8 V11.5 M0 5.5 H3.5 M8 5.5 H11.5 M1.6 1.6 L4 4 M9.4 1.6 L7.2 3.8 M1.6 9.4 L4 7" stroke="#d4d4d4" stroke-width="1.5"/></svg>
<svg style="left:135px;top:285px;" width="16" height="16" viewBox="0 0 16 16"><rect x="1" y="1" width="14" height="14" fill="none" stroke="#d4d4d4" stroke-width="1.6" stroke-dasharray="3.2 2"/><path class="f" d="M13.8 2.2 C13 1.4 11.8 1.7 11.2 2.3 L10.2 3.4 L9.6 2.9 L8.8 3.7 L12.3 7.2 L13.1 6.4 L12.6 5.8 L13.7 4.8 C14.4 4.1 14.5 2.9 13.8 2.2Z"/><path d="M9.6 4.8 L4.5 10 L4 12.5 L6.3 11.8 L11.2 6.5" fill="none" stroke="#d4d4d4" stroke-width="1.1"/></svg>
<svg style="left:161px;top:285px;" width="16" height="16" viewBox="0 0 16 16"><path d="M2 3.5 C0 8 1.5 15 8 15 C14.5 15 16 8 14 3.5" fill="none" stroke="#d4d4d4" stroke-width="1.6" stroke-dasharray="3 2"/><path d="M2 2 H14" stroke="#d4d4d4" stroke-width="1.2"/><circle cx="1.8" cy="2" r="1.6" fill="#d4d4d4"/><circle cx="14.2" cy="2" r="1.6" fill="#d4d4d4"/><circle cx="8" cy="2" r="1.6" fill="#d4d4d4"/></svg>
<svg style="left:187px;top:285px;" width="16" height="16" viewBox="0 0 16 16"><rect x="1" y="1" width="14" height="14" fill="none" stroke="#d4d4d4" stroke-width="1.6" stroke-dasharray="3.2 2"/><path d="M7 11 C7 6 9 4 12 4 C14.5 4 14.5 8 12 9" fill="none" stroke="#d4d4d4" stroke-width="1.5"/></svg>
<svg style="left:5px;top:317px;" width="16" height="16" viewBox="0 0 16 16"><circle cx="6" cy="6" r="4.6" fill="none" stroke="#d4d4d4" stroke-width="1.5" stroke-width="1.8"/><path d="M9.5 9.5 L15 15" stroke="#d4d4d4" stroke-width="2.4" stroke-linecap="round"/></svg>
<svg style="left:31px;top:317px;" width="16" height="16" viewBox="0 0 16 16"><path class="f" d="M4.5 16 C3 13 1.5 11 0.5 9.5 C0 8.5 1.3 7.6 2.2 8.6 L3.8 10.4 V2.5 C3.8 1.2 5.6 1.2 5.6 2.5 V7 H6.2 V1.2 C6.2 -0.1 8 -0.1 8 1.2 V7 H8.6 V1.8 C8.6 0.5 10.4 0.5 10.4 1.8 V7.4 H11 V3.6 C11 2.3 12.8 2.3 12.8 3.6 V11 C12.8 13 12.2 14.5 11.5 16Z"/></svg>
<div class="a" style="left:7px;top:124px;width:198px;height:1px;background:#525252;"></div>
<div class="a" style="left:7px;top:182px;width:66px;height:1px;background:#525252;"></div>
<div class="a" style="left:7px;top:214px;width:144px;height:1px;background:#525252;"></div>
<div class="a" style="left:7px;top:246px;width:66px;height:1px;background:#525252;"></div>
<div class="a" style="left:7px;top:278px;width:198px;height:1px;background:#525252;"></div>
<div class="a" style="left:7px;top:310px;width:40px;height:1px;background:#525252;"></div>
<div class="a" style="left:98px;top:353px;width:2px;height:2px;background:#7a7a7a;opacity:.8"></div>
<div class="a" style="left:101px;top:353px;width:2px;height:2px;background:#7a7a7a;opacity:.8"></div>
<div class="a" style="left:104px;top:353px;width:2px;height:2px;background:#7a7a7a;opacity:.8"></div>
<div class="a" style="left:107px;top:353px;width:2px;height:2px;background:#7a7a7a;opacity:.8"></div>
<div class="a" style="left:110px;top:353px;width:2px;height:2px;background:#7a7a7a;opacity:.8"></div>
<div class="a" style="left:113px;top:353px;width:2px;height:2px;background:#7a7a7a;opacity:.8"></div>
<svg style="left:2px;top:356px;" width="17" height="17" viewBox="0 0 17 17"><circle cx="8.5" cy="8.5" r="7.6" fill="none" stroke="#d4d4d4" stroke-width="1.1"/><rect class="f" x="5.2" y="8" width="6.6" height="4.6" rx="0.5"/><path d="M6.3 8 V6.2 A2.2 2.2 0 0 1 10.7 6.2" fill="none" stroke="#d4d4d4" stroke-width="1.1"/></svg>
<div class="t" style="left:24px;top:358px;font-size:11px;letter-spacing:0.036px;">Palette</div>
<svg style="left:172px;top:358px;" width="14" height="14" viewBox="0 0 14 14"><path d="M4.5 4 V0.7 H13.3 V9 H9.5" fill="none" stroke="#d4d4d4" stroke-width="1.3"/><rect x="0.7" y="4.6" width="8.6" height="8.6" fill="none" stroke="#d4d4d4" stroke-width="1.3"/></svg>
<svg style="left:196px;top:359px;" width="11" height="11" viewBox="0 0 11 11"><path d="M0.5 0.5 L10.5 10.5 M10.5 0.5 L0.5 10.5" stroke="#d4d4d4" stroke-width="1.4" fill="none"/></svg>
<div class="a" style="left:1.7px;top:375px;width:192.5px;height:66px;background:#3a3a3a;"></div>
<div class="a" style="left:2px;top:375px;width:10px;height:10px;background:#ffffff"></div>
<div class="a" style="left:13px;top:375px;width:10px;height:10px;background:#f2f2f2"></div>
<div class="a" style="left:24px;top:375px;width:10px;height:10px;background:#e6e6e6"></div>
<div class="a" style="left:35px;top:375px;width:10px;height:10px;background:#d9d9d9"></div>
<div class="a" style="left:46px;top:375px;width:10px;height:10px;background:#cccccc"></div>
<div class="a" style="left:57px;top:375px;width:10px;height:10px;background:#bfbfbf"></div>
<div class="a" style="left:68px;top:375px;width:9px;height:10px;background:#b3b3b3"></div>
<div class="a" style="left:78px;top:375px;width:10px;height:10px;background:#a6a6a6"></div>
<div class="a" style="left:89px;top:375px;width:10px;height:10px;background:#999999"></div>
<div class="a" style="left:100px;top:375px;width:10px;height:10px;background:#8c8c8c"></div>
<div class="a" style="left:112px;top:375px;width:9px;height:10px;background:#808080"></div>
<div class="a" style="left:122px;top:375px;width:9px;height:10px;background:#737373"></div>
<div class="a" style="left:132px;top:375px;width:9px;height:10px;background:#666666"></div>
<div class="a" style="left:142px;top:375px;width:10px;height:10px;background:#5c5c5c"></div>
<div class="a" style="left:153px;top:375px;width:9px;height:10px;background:#525252"></div>
<div class="a" style="left:163px;top:375px;width:9px;height:10px;background:#474747"></div>
<div class="a" style="left:173px;top:375px;width:9px;height:10px;background:#3d3d3d"></div>
<div class="a" style="left:183px;top:375px;width:9px;height:10px;background:#333333"></div>
<div class="a" style="left:2px;top:386px;width:10px;height:10px;background:#3c0010"></div>
<div class="a" style="left:13px;top:386px;width:10px;height:10px;background:#8c0030"></div>
<div class="a" style="left:24px;top:386px;width:10px;height:10px;background:#b01c40"></div>
<div class="a" style="left:35px;top:386px;width:10px;height:10px;background:#d40000"></div>
<div class="a" style="left:46px;top:386px;width:10px;height:10px;background:#ff3020"></div>
<div class="a" style="left:57px;top:386px;width:10px;height:10px;background:#ff4a00"></div>
<div class="a" style="left:68px;top:386px;width:9px;height:10px;background:#ff8c5a"></div>
<div class="a" style="left:78px;top:386px;width:10px;height:10px;background:#ffa020"></div>
<div class="a" style="left:89px;top:386px;width:10px;height:10px;background:#ffe000"></div>
<div class="a" style="left:100px;top:386px;width:10px;height:10px;background:#f0ff30"></div>
<div class="a" style="left:112px;top:386px;width:9px;height:10px;background:#180c30"></div>
<div class="a" style="left:122px;top:386px;width:9px;height:10px;background:#003a6c"></div>
<div class="a" style="left:132px;top:386px;width:9px;height:10px;background:#2c5490"></div>
<div class="a" style="left:142px;top:386px;width:10px;height:10px;background:#1848b8"></div>
<div class="a" style="left:153px;top:386px;width:9px;height:10px;background:#2070f8"></div>
<div class="a" style="left:163px;top:386px;width:9px;height:10px;background:#68acf8"></div>
<div class="a" style="left:173px;top:386px;width:9px;height:10px;background:#a8ccf8"></div>
<div class="a" style="left:183px;top:386px;width:9px;height:10px;background:#dcecfc"></div>
<div class="a" style="left:2px;top:397px;width:10px;height:10px;background:#4c1010"></div>
<div class="a" style="left:13px;top:397px;width:10px;height:10px;background:#902c3c"></div>
<div class="a" style="left:24px;top:397px;width:10px;height:10px;background:#a04040"></div>
<div class="a" style="left:35px;top:397px;width:10px;height:10px;background:#c04828"></div>
<div class="a" style="left:46px;top:397px;width:10px;height:10px;background:#d87048"></div>
<div class="a" style="left:57px;top:397px;width:10px;height:10px;background:#f0a070"></div>
<div class="a" style="left:68px;top:397px;width:9px;height:10px;background:#ffc8a0"></div>
<div class="a" style="left:78px;top:397px;width:10px;height:10px;background:#ffe0c8"></div>
<div class="a" style="left:89px;top:397px;width:10px;height:10px;background:#fff0c0"></div>
<div class="a" style="left:100px;top:397px;width:10px;height:10px;background:#f0e8c0"></div>
<div class="a" style="left:112px;top:397px;width:9px;height:10px;background:#101c24"></div>
<div class="a" style="left:122px;top:397px;width:9px;height:10px;background:#1c3840"></div>
<div class="a" style="left:132px;top:397px;width:9px;height:10px;background:#2c5c60"></div>
<div class="a" style="left:142px;top:397px;width:10px;height:10px;background:#4c7c70"></div>
<div class="a" style="left:153px;top:397px;width:9px;height:10px;background:#109c9c"></div>
<div class="a" style="left:163px;top:397px;width:9px;height:10px;background:#40b8c0"></div>
<div class="a" style="left:173px;top:397px;width:9px;height:10px;background:#68b8d8"></div>
<div class="a" style="left:183px;top:397px;width:9px;height:10px;background:#a8dcc8"></div>
<div class="a" style="left:2px;top:408px;width:10px;height:10px;background:#402000"></div>
<div class="a" style="left:13px;top:408px;width:10px;height:10px;background:#8c4410"></div>
<div class="a" style="left:24px;top:408px;width:10px;height:10px;background:#c84c08"></div>
<div class="a" style="left:35px;top:408px;width:10px;height:10px;background:#ff7008"></div>
<div class="a" style="left:46px;top:408px;width:10px;height:10px;background:#ff9000"></div>
<div class="a" style="left:57px;top:408px;width:10px;height:10px;background:#ffc000"></div>
<div class="a" style="left:68px;top:408px;width:9px;height:10px;background:#e8a010"></div>
<div class="a" style="left:78px;top:408px;width:10px;height:10px;background:#c8c098"></div>
<div class="a" style="left:89px;top:408px;width:10px;height:10px;background:#d8c090"></div>
<div class="a" style="left:100px;top:408px;width:10px;height:10px;background:#e8d088"></div>
<div class="a" style="left:112px;top:408px;width:9px;height:10px;background:#143424"></div>
<div class="a" style="left:122px;top:408px;width:9px;height:10px;background:#2c4c3c"></div>
<div class="a" style="left:132px;top:408px;width:9px;height:10px;background:#206c40"></div>
<div class="a" style="left:142px;top:408px;width:10px;height:10px;background:#3c9c74"></div>
<div class="a" style="left:153px;top:408px;width:9px;height:10px;background:#50b080"></div>
<div class="a" style="left:163px;top:408px;width:9px;height:10px;background:#309060"></div>
<div class="a" style="left:173px;top:408px;width:9px;height:10px;background:#70c878"></div>
<div class="a" style="left:183px;top:408px;width:9px;height:10px;background:#b0dcb0"></div>
<div class="a" style="left:2px;top:419px;width:10px;height:10px;background:#281428"></div>
<div class="a" style="left:13px;top:419px;width:10px;height:10px;background:#401850"></div>
<div class="a" style="left:24px;top:419px;width:10px;height:10px;background:#581c38"></div>
<div class="a" style="left:35px;top:419px;width:10px;height:10px;background:#5020a0"></div>
<div class="a" style="left:46px;top:419px;width:10px;height:10px;background:#9020a0"></div>
<div class="a" style="left:57px;top:419px;width:10px;height:10px;background:#d04880"></div>
<div class="a" style="left:68px;top:419px;width:9px;height:10px;background:#e02870"></div>
<div class="a" style="left:78px;top:419px;width:10px;height:10px;background:#f020a0"></div>
<div class="a" style="left:89px;top:419px;width:10px;height:10px;background:#ff60c0"></div>
<div class="a" style="left:100px;top:419px;width:10px;height:10px;background:#ffc8d8"></div>
<div class="a" style="left:112px;top:419px;width:9px;height:10px;background:#143820"></div>
<div class="a" style="left:122px;top:419px;width:9px;height:10px;background:#005c28"></div>
<div class="a" style="left:132px;top:419px;width:9px;height:10px;background:#2c9010"></div>
<div class="a" style="left:142px;top:419px;width:10px;height:10px;background:#60b040"></div>
<div class="a" style="left:153px;top:419px;width:9px;height:10px;background:#689000"></div>
<div class="a" style="left:163px;top:419px;width:9px;height:10px;background:#8cd030"></div>
<div class="a" style="left:173px;top:419px;width:9px;height:10px;background:#d8e020"></div>
<div class="a" style="left:183px;top:419px;width:9px;height:10px;background:#b8f020"></div>
<div class="a" style="left:2px;top:430px;width:10px;height:10px;background:#000000"></div>
<div class="a" style="left:13px;top:430px;width:10px;height:10px;background:#880000"></div>
<div class="a" style="left:24px;top:430px;width:10px;height:10px;background:#ff0000"></div>
<div class="a" style="left:35px;top:430px;width:10px;height:10px;background:#ff1088"></div>
<div class="a" style="left:46px;top:430px;width:10px;height:10px;background:#ff00ff"></div>
<div class="a" style="left:57px;top:430px;width:10px;height:10px;background:#ff80ff"></div>
<div class="a" style="left:68px;top:430px;width:9px;height:10px;background:#ff8080"></div>
<div class="a" style="left:78px;top:430px;width:10px;height:10px;background:#ff8000"></div>
<div class="a" style="left:89px;top:430px;width:10px;height:10px;background:#ffff00"></div>
<div class="a" style="left:100px;top:430px;width:10px;height:10px;background:#ffff80"></div>
<div class="a" style="left:112px;top:430px;width:9px;height:10px;background:#000090"></div>
<div class="a" style="left:122px;top:430px;width:9px;height:10px;background:#400090"></div>
<div class="a" style="left:132px;top:430px;width:9px;height:10px;background:#0000ff"></div>
<div class="a" style="left:142px;top:430px;width:10px;height:10px;background:#8000ff"></div>
<div class="a" style="left:153px;top:430px;width:9px;height:10px;background:#8080ff"></div>
<div class="a" style="left:163px;top:430px;width:9px;height:10px;background:#00ffff"></div>
<div class="a" style="left:173px;top:430px;width:9px;height:10px;background:#80ffff"></div>
<div class="a" style="left:183px;top:430px;width:9px;height:10px;background:#80ff80"></div>
<div class="a" style="left:195px;top:375px;width:14px;height:70px;background:#3c3c3c;"></div>
<svg style="left:195px;top:375px;" width="13" height="13" viewBox="0 0 13 13"><rect x="0.5" y="0.5" width="12" height="12" fill="#464646" stroke="#575757"/><path d="M3 8.5 L6.5 4.5 L10 8.5Z" fill="#a8a8a8"/></svg>
<svg style="left:195px;top:431px;" width="13" height="13" viewBox="0 0 13 13"><rect x="0.5" y="0.5" width="12" height="12" fill="#464646" stroke="#575757"/><path d="M3 4.5 L6.5 8.5 L10 4.5Z" fill="#a8a8a8"/></svg>
<div class="a" style="left:196px;top:389px;width:12px;height:41px;background:#484848;border:1px solid #575757"></div>
<div class="a" style="left:2px;top:446px;width:193px;height:13px;background:#3c3c3c;"></div>
<svg style="left:2px;top:446px;" width="13" height="13" viewBox="0 0 13 13"><rect x="0.5" y="0.5" width="12" height="12" fill="#464646" stroke="#575757"/><path d="M8.5 3 L4.5 6.5 L8.5 10Z" fill="#a8a8a8"/></svg>
<svg style="left:181px;top:446px;" width="13" height="13" viewBox="0 0 13 13"><rect x="0.5" y="0.5" width="12" height="12" fill="#464646" stroke="#575757"/><path d="M4.5 3 L8.5 6.5 L4.5 10Z" fill="#a8a8a8"/></svg>
<div class="a" style="left:16px;top:446px;width:147px;height:13px;background:#484848;border:1px solid #575757"></div>
<div class="a" style="left:195px;top:446px;width:14px;height:13px;background:#484848;border:1px solid #575757"></div>
<div class="a" style="left:2px;top:462px;width:207px;height:23px;background:#383838;border-top:1px solid #555"></div>
<div class="a" style="left:5px;top:466px;width:16px;height:16px;background:#35916a;"></div>
<div class="t" style="left:25px;top:467px;;letter-spacing:-0.297px;">None</div>
<div class="t" style="left:1px;top:486px;;letter-spacing:-0.076px;">Default</div>
<div class="a" style="left:5px;top:503px;width:16px;height:16px;background:#e8e8e8;"></div>
<div class="a" style="left:6px;top:504px;width:4px;height:4px;background:#2060c0;"></div>
<div class="a" style="left:11px;top:504px;width:4px;height:4px;background:#30a0c0;"></div>
<div class="a" style="left:16px;top:504px;width:4px;height:4px;background:#30c0c0;"></div>
<div class="a" style="left:6px;top:509px;width:4px;height:4px;background:#c02030;"></div>
<div class="a" style="left:11px;top:509px;width:4px;height:4px;background:#c02080;"></div>
<div class="a" style="left:16px;top:509px;width:4px;height:4px;background:#8020c0;"></div>
<div class="a" style="left:6px;top:514px;width:4px;height:4px;background:#e08020;"></div>
<div class="a" style="left:11px;top:514px;width:4px;height:4px;background:#80c030;"></div>
<div class="a" style="left:16px;top:514px;width:4px;height:4px;background:#a0d030;"></div>
<svg style="left:66px;top:504px;" width="14" height="14" viewBox="0 0 14 14"><path d="M7 0 V14 M0 7 H14" stroke="#d4d4d4" stroke-width="2"/></svg>
<svg style="left:91px;top:504px;" width="15" height="15" viewBox="0 0 15 15"><path d="M10.5 1 L14 4.5 L5 13.5 L0.8 14.4 L1.6 10Z" fill="none" stroke="#d4d4d4" stroke-width="1.4"/><path class="f" d="M0.8 14.4 L1.6 10 L5 13.5Z"/></svg>
<svg style="left:116px;top:504px;" width="15" height="15" viewBox="0 0 15 15"><path class="s" d="M0.7 0.7 H11 L14.3 4 V14.3 H0.7 Z" stroke-width="1.3"/><path class="s" d="M4 0.7 V5 H10.5 V0.7 M3.5 14 V9 H11.5 V14" stroke-width="1.3"/></svg>
<svg style="left:140px;top:503px;" width="16" height="16" viewBox="0 0 16 16"><path d="M0.7 0.7 H15.3 V15.3 H0.7Z M5.6 0.7 V15.3 M10.4 0.7 V15.3 M0.7 5.6 H15.3 M0.7 10.4 H15.3" fill="none" stroke="#d4d4d4" stroke-width="1.2"/></svg>
<svg style="left:166px;top:503px;" width="14" height="16" viewBox="0 0 14 16"><path class="f" d="M1 3 H13 V4.5 H1Z M4.5 1 H9.5 V3 H4.5Z M2 5.5 H12 V14.5 Q12 16 10.5 16 H3.5 Q2 16 2 14.5Z"/></svg>
<div class="cb" style="left:187px;top:502px;width:22px;height:19px;"></div>
<div class="t" style="left:192px;top:505px;font-size:11px;;">...</div>
<div class="a" style="left:98px;top:526px;width:2px;height:2px;background:#7a7a7a;opacity:.8"></div>
<div class="a" style="left:101px;top:526px;width:2px;height:2px;background:#7a7a7a;opacity:.8"></div>
<div class="a" style="left:104px;top:526px;width:2px;height:2px;background:#7a7a7a;opacity:.8"></div>
<div class="a" style="left:107px;top:526px;width:2px;height:2px;background:#7a7a7a;opacity:.8"></div>
<div class="a" style="left:110px;top:526px;width:2px;height:2px;background:#7a7a7a;opacity:.8"></div>
<div class="a" style="left:113px;top:526px;width:2px;height:2px;background:#7a7a7a;opacity:.8"></div>
<div class="a" style="left:1px;top:531px;width:109px;height:24px;background:#4a4a4a;border:1px solid #5c5c5c;border-bottom:none;border-radius:3px 3px 0 0"></div>
<div class="a" style="left:112px;top:533px;width:97px;height:21px;background:#444;border:1px solid #555;border-bottom:none;border-radius:3px 3px 0 0"></div>
<div class="t" style="left:15px;top:536px;;letter-spacing:-0.381px;">Advanced Col...</div>
<div class="t" style="left:122px;top:537px;;letter-spacing:-0.347px;">Specific Colo...</div>
<svg style="left:2px;top:555px;" width="17" height="17" viewBox="0 0 17 17"><circle cx="8.5" cy="8.5" r="7.6" fill="none" stroke="#d4d4d4" stroke-width="1.1"/><rect class="f" x="5.2" y="8" width="6.6" height="4.6" rx="0.5"/><path d="M6.3 8 V6.2 A2.2 2.2 0 0 1 10.7 6.2" fill="none" stroke="#d4d4d4" stroke-width="1.1"/></svg>
<div class="t" style="left:24px;top:557px;font-size:11px;letter-spacing:0.166px;">Advanced Color Selector</div>
<svg style="left:172px;top:557px;" width="14" height="14" viewBox="0 0 14 14"><path d="M4.5 4 V0.7 H13.3 V9 H9.5" fill="none" stroke="#d4d4d4" stroke-width="1.3"/><rect x="0.7" y="4.6" width="8.6" height="8.6" fill="none" stroke="#d4d4d4" stroke-width="1.3"/></svg>
<svg style="left:196px;top:558px;" width="11" height="11" viewBox="0 0 11 11"><path d="M0.5 0.5 L10.5 10.5 M10.5 0.5 L0.5 10.5" stroke="#d4d4d4" stroke-width="1.4" fill="none"/></svg>
<svg style="left:9px;top:580px;" width="16" height="16" viewBox="0 0 16 16"><rect x="0.7" y="0.7" width="14.6" height="14.6" fill="none" stroke="#d4d4d4" stroke-width="1.2"/><path d="M0.7 3.4 H15.3" stroke="#d4d4d4" stroke-width="1.4"/><path d="M3 6.5 H5 M3 9.2 H5 M3 12 H5 M6.5 6.5 H13 M6.5 9.2 H13 M6.5 12 H13" stroke="#d4d4d4" stroke-width="1.3"/></svg>
<div class="a" style="left:193px;top:573px;width:16px;height:299px;background:#383838;"></div>
<svg style="left:194px;top:573px;" width="14" height="14" viewBox="0 0 14 14"><circle cx="7" cy="7" r="5.6" fill="none" stroke="#d4d4d4" stroke-width="1.5"/><path d="M3 3 L11 11" stroke="#d4d4d4" stroke-width="1.5"/></svg>
<div class="a" style="left:193px;top:587.8px;width:16px;height:16.2px;background:#00e5ff"></div>
<div class="a" style="left:193px;top:603.9px;width:16px;height:16.2px;background:#4fa88a"></div>
<div class="a" style="left:193px;top:619.9px;width:16px;height:16.2px;background:#a070d0"></div>
<div class="a" style="left:193px;top:636.0px;width:16px;height:16.2px;background:#8000ff"></div>
<div class="a" style="left:193px;top:652.1px;width:16px;height:16.2px;background:#6cc46c"></div>
<div class="a" style="left:193px;top:668.1px;width:16px;height:16.2px;background:#68be70"></div>
<div class="a" style="left:193px;top:684.2px;width:16px;height:16.2px;background:#60b878"></div>
<div class="a" style="left:193px;top:700.3px;width:16px;height:16.2px;background:#3096e8"></div>
<div class="a" style="left:193px;top:716.4px;width:16px;height:16.2px;background:#28d8e8"></div>
<div class="a" style="left:193px;top:732.4px;width:16px;height:16.2px;background:#f4f4f4"></div>
<div class="a" style="left:193px;top:748.5px;width:16px;height:16.2px;background:#f4f4f4"></div>
<div class="a" style="left:193px;top:764.6px;width:16px;height:16.2px;background:#308858"></div>
<div class="a" style="left:193px;top:780.6px;width:16px;height:16.2px;background:#2858e0"></div>
<div class="a" style="left:193px;top:796.7px;width:16px;height:16.2px;background:#707070"></div>
<div class="a" style="left:1.2px;top:602.4px;width:190.8px;height:190.8px;border-radius:50%;background:conic-gradient(from -90deg,#f00,#ff0,#0f0,#0ff,#00f,#f0f,#f00);-webkit-mask-image:radial-gradient(circle closest-side,transparent 82.83%,#000 83.83%,#000 99%,transparent 100%);mask-image:radial-gradient(circle closest-side,transparent 82.83%,#000 83.83%,#000 99%,transparent 100%)"></div>
<svg style="left:0px;top:0px;" width="216" height="900" viewBox="0 0 216 900"><defs>
<linearGradient id="trA" gradientUnits="userSpaceOnUse" x1="27.8" y1="737.5" x2="165.4" y2="737.5"><stop offset="0" stop-color="#fff"/><stop offset="1" stop-color="#00e9ff"/></linearGradient>
<linearGradient id="trB" gradientUnits="userSpaceOnUse" x1="96.6" y1="618.3" x2="96.6" y2="737.5"><stop offset="0" stop-color="#000" stop-opacity="1"/><stop offset="1" stop-color="#000" stop-opacity="0"/></linearGradient>
</defs>
<path d="M96.6 618.3 L27.8 737.5 L165.4 737.5Z" fill="url(#trA)"/>
<path d="M96.6 618.3 L27.8 737.5 L165.4 737.5Z" fill="url(#trB)"/>
<path d="M176.1 704.0 L192.0 706.0" stroke="#e8e8e8" stroke-width="1.3"/>
<circle cx="164.3" cy="736.6" r="3.6" fill="none" stroke="#222" stroke-width="1.1"/><circle cx="164.3" cy="736.6" r="2.6" fill="none" stroke="#eee" stroke-width="0.9"/>
</svg>
<div class="a" style="left:1px;top:823px;width:192px;height:10.5px;background:linear-gradient(90deg,#00ff78,#00ffc0 25%,#00e8ff 50%,#00a0ff 75%,#0048f0);"></div>
<div class="a" style="left:1px;top:834.5px;width:192px;height:10.5px;background:linear-gradient(90deg,#3a8890,#18c8e0 35%,#06e6ff 50%,#10e8ff);"></div>
<div class="a" style="left:1px;top:846px;width:192px;height:10px;background:linear-gradient(90deg,#006c7c,#00b8d0 30%,#00e5ff 50%,#60f0ff 75%,#a8f6ff);"></div>
<div class="a" style="left:93px;top:823px;width:9px;height:10.5px;border-left:1px solid #555;border-right:1px solid #555;background:#18e0f8"></div>
<div class="a" style="left:93px;top:834.5px;width:9px;height:10.5px;border-left:1px solid #555;border-right:1px solid #555;background:#18e0f8"></div>
<div class="a" style="left:93px;top:846px;width:9px;height:10.5px;border-left:1px solid #555;border-right:1px solid #555;background:#18e0f8"></div>
<svg style="left:2px;top:860px;" width="14" height="14" viewBox="0 0 14 14"><path class="s" d="M1.8 8 A5.3 5.3 0 0 1 11 3.4 M12.2 6 A5.3 5.3 0 0 1 3 10.6" stroke-width="1.5"/><path class="f" d="M13 0.8 L12.6 5.6 L8.2 4Z M1 13.2 L1.4 8.4 L5.8 10Z"/></svg>
<div class="a" style="left:98px;top:877px;width:2px;height:2px;background:#7a7a7a;opacity:.8"></div>
<div class="a" style="left:101px;top:877px;width:2px;height:2px;background:#7a7a7a;opacity:.8"></div>
<div class="a" style="left:104px;top:877px;width:2px;height:2px;background:#7a7a7a;opacity:.8"></div>
<div class="a" style="left:107px;top:877px;width:2px;height:2px;background:#7a7a7a;opacity:.8"></div>
<div class="a" style="left:110px;top:877px;width:2px;height:2px;background:#7a7a7a;opacity:.8"></div>
<div class="a" style="left:113px;top:877px;width:2px;height:2px;background:#7a7a7a;opacity:.8"></div>
<svg style="left:2px;top:881px;" width="17" height="17" viewBox="0 0 17 17"><circle cx="8.5" cy="8.5" r="7.6" fill="none" stroke="#d4d4d4" stroke-width="1.1"/><rect class="f" x="5.2" y="8" width="6.6" height="4.6" rx="0.5"/><path d="M6.3 8 V6.2 A2.2 2.2 0 0 1 10.7 6.2" fill="none" stroke="#d4d4d4" stroke-width="1.1"/></svg>
<div class="t" style="left:24px;top:883px;font-size:11px;letter-spacing:-0.084px;">Brush Presets</div>
<svg style="left:172px;top:883px;" width="14" height="14" viewBox="0 0 14 14"><path d="M4.5 4 V0.7 H13.3 V9 H9.5" fill="none" stroke="#d4d4d4" stroke-width="1.3"/><rect x="0.7" y="4.6" width="8.6" height="8.6" fill="none" stroke="#d4d4d4" stroke-width="1.3"/></svg>
<svg style="left:196px;top:884px;" width="11" height="11" viewBox="0 0 11 11"><path d="M0.5 0.5 L10.5 10.5 M10.5 0.5 L0.5 10.5" stroke="#d4d4d4" stroke-width="1.4" fill="none"/></svg>
<div class="cb" style="left:2px;top:899px;width:107px;height:21px;"></div>
<div class="t" style="left:6px;top:903px;letter-spacing:0;letter-spacing:-0.115px;">All</div>
<svg style="left:95px;top:907px;" width="8" height="5" viewBox="0 0 8 5"><path d="M0 0 H8 L4 4.5Z" fill="#9a9a9a"/></svg>
<div class="cb" style="left:111px;top:899px;width:50px;height:21px;"></div>
<svg style="left:116px;top:902px;" width="10" height="14" viewBox="0 0 10 14"><path d="M1 0.7 H9 V12.5 L5 9.5 L1 12.5Z" fill="none" stroke="#d4d4d4" stroke-width="1.4"/></svg>
<div class="t" style="left:131px;top:903px;letter-spacing:0;letter-spacing:-0.953px;">Tag</div>
<svg style="left:153px;top:914px;" width="6" height="4" viewBox="0 0 6 4"><path d="M0 0 H6 L3 3.5Z" fill="#8a8a8a"/></svg>
<svg style="left:167px;top:903px;" width="13" height="12" viewBox="0 0 13 12"><path d="M0 1.5 H13 M0 6 H13 M0 10.5 H13" stroke="#d4d4d4" stroke-width="1.8"/></svg>
<svg style="left:189px;top:901px;" width="16" height="16" viewBox="0 0 16 16"><rect x="0.7" y="0.7" width="14.6" height="14.6" fill="none" stroke="#d4d4d4" stroke-width="1.3"/><path d="M8 1 V7" stroke="#d4d4d4" stroke-width="1.2" stroke-dasharray="1.2 1"/></svg>
<div class="a" style="left:2px;top:922px;width:181px;height:104px;background:#2a2a2a;"></div>
<div class="a" style="left:3px;top:922.5px;width:58px;height:42.5px;background:#dcdcdc;overflow:hidden"><svg style="left:0;top:0" width="58" height="42.5" viewBox="0 0 58 42.5"><path d="M13 26 C20 29 28 31 36 33" stroke="#a070d0" stroke-width="9" fill="none" opacity=".8" stroke-linecap="round"/><path d="M34 29.5 L58 36" stroke="#fff" stroke-width="8" opacity=".92"/><path d="M19 20 C24 22 30 18 35 9 L41 12 C37 18 30 23 24 22Z" fill="#2a2020"/><path d="M35 9 L46 -1 L52 3 L41 12Z" fill="#a09888"/></svg></div>
<div class="a" style="left:63px;top:922.5px;width:58px;height:42.5px;background:#dcdcdc;overflow:hidden"><svg style="left:0;top:0" width="58" height="42.5" viewBox="0 0 58 42.5"><path d="M22.5 10 C14 15 9 24 18 29 C28 33 44 30 54 25" stroke="#5a80e0" stroke-width="2.6" fill="none" opacity=".6"/><path d="M24 18 L31 9.5 L34 12.5Z" fill="#a0601c"/><path d="M32 11 L44 -1" stroke="#99a" stroke-width="2.4"/></svg></div>
<div class="a" style="left:123px;top:922.5px;width:59px;height:42.5px;background:#dcdcdc;overflow:hidden"><svg style="left:0;top:0" width="59" height="42.5" viewBox="0 0 59 42.5"><path d="M13 21 L38 31 L36.5 20.5 L58 26" stroke="#5a80e0" stroke-width="3.2" fill="none" opacity=".6" stroke-linecap="round"/><path d="M13 21 L22 25" stroke="#3a60d0" stroke-width="4" opacity=".7" stroke-linecap="round"/><path d="M25 18 L32 9.5 L35 12.5Z" fill="#a0601c"/><path d="M33 11 L45 -1" stroke="#99a" stroke-width="2.4"/></svg></div>
<div class="a" style="left:3px;top:967px;width:58px;height:58.5px;background:#dcdcdc;overflow:hidden"><svg style="left:0;top:0" width="58" height="58.5" viewBox="0 0 58 58.5"><path d="M12 30 C12 46 30 46 56 36" stroke="#4a80e8" stroke-width="6" fill="none" opacity=".65" stroke-dasharray="1.5 1"/><path d="M25 34 L33 25 L36 28 Z" fill="#a0601c"/><path d="M34 27 L44 16" stroke="#aab" stroke-width="3"/><path d="M44 16 L58 2" stroke="#1890d8" stroke-width="4.5"/></svg></div>
<div class="a" style="left:63px;top:967px;width:58px;height:58.5px;background:#dcdcdc;overflow:hidden"><svg style="left:0;top:0" width="58" height="58.5" viewBox="0 0 58 58.5"><path d="M10 30 C10 52 40 50 58 34" stroke="#4a70e0" stroke-width="9" fill="none" opacity=".55"/><path d="M24 33 L34 21 L38 25 Z" fill="#a0601c"/><path d="M36 23 L52 6" stroke="#aab" stroke-width="3.2"/><path d="M52 6 L58 0" stroke="#1890d8" stroke-width="4.5"/></svg></div>
<div class="a" style="left:123px;top:967px;width:59px;height:58.5px;background:#8cc6ea;overflow:hidden"><svg style="left:0;top:0" width="59" height="58.5" viewBox="0 0 59 58.5"><rect x="0" y="0" width="59" height="58.5" fill="none" stroke="#5a7ea4" stroke-width="7"/><path d="M10 26 C10 52 38 46 56 34" stroke="#2c6ce0" stroke-width="9" fill="none" opacity=".8"/><path d="M24 33 L34 21 L38 25 Z" fill="#8a5018"/><path d="M36 23 L54 4" stroke="#6a8aa0" stroke-width="3.2"/><path d="M6 12 L12 6 L15 9 L9 15Z" fill="#203050"/><path d="M7.5 10.5 L10.5 13.5" stroke="#8cc6ea" stroke-width="1"/></svg></div>
<div class="a" style="left:195px;top:923px;width:14px;height:103px;background:#3c3c3c;"></div>
<svg style="left:195px;top:923px;" width="13" height="13" viewBox="0 0 13 13"><rect x="0.5" y="0.5" width="12" height="12" fill="#464646" stroke="#575757"/><path d="M3 8.5 L6.5 4.5 L10 8.5Z" fill="#a8a8a8"/></svg>
<svg style="left:195px;top:1013px;" width="13" height="13" viewBox="0 0 13 13"><rect x="0.5" y="0.5" width="12" height="12" fill="#464646" stroke="#575757"/><path d="M3 4.5 L6.5 8.5 L10 4.5Z" fill="#a8a8a8"/></svg>
<div class="a" style="left:196px;top:957px;width:12px;height:27px;background:#484848;border:1px solid #575757"></div>
<div class="a" style="left:2px;top:1028px;width:117px;height:21px;background:#3b3b3b;border:1px solid #424242;border-radius:2px"></div>
<div class="t" style="left:4px;top:1032px;color:#7c7c7c;letter-spacing:-0.789px;">Search</div>
<div class="a" style="left:125px;top:1030px;width:14px;height:14px;background:#383838;border-radius:1px"></div>
<svg style="left:126px;top:1031px;" width="12" height="12" viewBox="0 0 12 12"><path d="M2 6 L5 10 L10.5 1.5" fill="none" stroke="#d4d4d4" stroke-width="1.6"/></svg>
<div class="t" style="left:144px;top:1031px;letter-spacing:0;letter-spacing:-0.255px;">Filter in Tag</div>
<div class="a" style="left:1636px;top:558px;width:2px;height:2px;background:#7a7a7a;opacity:.8"></div>
<div class="a" style="left:1636px;top:561px;width:2px;height:2px;background:#7a7a7a;opacity:.8"></div>
<div class="a" style="left:1636px;top:564px;width:2px;height:2px;background:#7a7a7a;opacity:.8"></div>
<div class="a" style="left:1636px;top:567px;width:2px;height:2px;background:#7a7a7a;opacity:.8"></div>
<div class="a" style="left:1636px;top:570px;width:2px;height:2px;background:#7a7a7a;opacity:.8"></div>
<div class="a" style="left:1636px;top:573px;width:2px;height:2px;background:#7a7a7a;opacity:.8"></div>
<svg style="left:1641px;top:79px;" width="17" height="17" viewBox="0 0 17 17"><circle cx="8.5" cy="8.5" r="7.6" fill="none" stroke="#d4d4d4" stroke-width="1.1"/><rect class="f" x="5.2" y="8" width="6.6" height="4.6" rx="0.5"/><path d="M6.3 8 V6.2 A2.2 2.2 0 0 1 10.7 6.2" fill="none" stroke="#d4d4d4" stroke-width="1.1"/></svg>
<div class="t" style="left:1663px;top:81px;font-size:11px;letter-spacing:0.020px;">Overview</div>
<svg style="left:1881px;top:81px;" width="14" height="14" viewBox="0 0 14 14"><path d="M4.5 4 V0.7 H13.3 V9 H9.5" fill="none" stroke="#d4d4d4" stroke-width="1.3"/><rect x="0.7" y="4.6" width="8.6" height="8.6" fill="none" stroke="#d4d4d4" stroke-width="1.3"/></svg>
<svg style="left:1905px;top:82px;" width="11" height="11" viewBox="0 0 11 11"><path d="M0.5 0.5 L10.5 10.5 M10.5 0.5 L0.5 10.5" stroke="#d4d4d4" stroke-width="1.4" fill="none"/></svg>
<div class="a" style="left:1639px;top:95px;width:281px;height:94px;background:#383838;"></div>
<div class="a" style="left:1707px;top:95px;width:145px;height:94px;border:1px solid #56789a;border-bottom:1px dashed #7d9ab8"></div>
<div class="a" style="left:1732px;top:96px;width:95px;height:93px;overflow:hidden">
<div class="a" style="left:0;top:0px;width:95px;height:12px;background:linear-gradient(90deg,#30c4a6,#43ceab,#58d8b0,#74e2b9,#90ecc0,#a8f3c2,#c0f8c0,#d8fcbc,#f0ffb8)"></div>
<div class="a" style="left:0;top:0px;width:95px;height:12px;background:linear-gradient(90deg,#2faf9e,#3ebba2,#4fc7a6,#65d4ab,#7ee0af,#99eaae,#b4f2ab,#ccf7a8,#e2fca4);-webkit-mask-image:linear-gradient(to bottom,transparent,#000);mask-image:linear-gradient(to bottom,transparent,#000)"></div>
<div class="a" style="left:0;top:12px;width:95px;height:11px;background:linear-gradient(90deg,#2faf9e,#3ebba2,#4fc7a6,#65d4ab,#7ee0af,#99eaae,#b4f2ab,#ccf7a8,#e2fca4)"></div>
<div class="a" style="left:0;top:12px;width:95px;height:11px;background:linear-gradient(90deg,#2e9a96,#3aa999,#48b89c,#5ac69f,#70d4a0,#8ce19d,#a8ec98,#bff394,#d4f890);-webkit-mask-image:linear-gradient(to bottom,transparent,#000);mask-image:linear-gradient(to bottom,transparent,#000)"></div>
<div class="a" style="left:0;top:23px;width:95px;height:12px;background:linear-gradient(90deg,#2e9a96,#3aa999,#48b89c,#5ac69f,#70d4a0,#8ce19d,#a8ec98,#bff394,#d4f890)"></div>
<div class="a" style="left:0;top:23px;width:95px;height:12px;background:linear-gradient(90deg,#2c828f,#3a9b93,#48b196,#58c096,#6bcc94,#83da91,#9ce68b,#b1ee84,#c4f47b);-webkit-mask-image:linear-gradient(to bottom,transparent,#000);mask-image:linear-gradient(to bottom,transparent,#000)"></div>
<div class="a" style="left:0;top:35px;width:95px;height:11px;background:linear-gradient(90deg,#2c828f,#3a9b93,#48b196,#58c096,#6bcc94,#83da91,#9ce68b,#b1ee84,#c4f47b)"></div>
<div class="a" style="left:0;top:35px;width:95px;height:11px;background:linear-gradient(90deg,#2a6c88,#398c8d,#48a890,#57b88e,#68c48a,#7cd386,#90e080,#a2e975,#b4f068);-webkit-mask-image:linear-gradient(to bottom,transparent,#000);mask-image:linear-gradient(to bottom,transparent,#000)"></div>
<div class="a" style="left:0;top:46px;width:95px;height:12px;background:linear-gradient(90deg,#2a6c88,#398c8d,#48a890,#57b88e,#68c48a,#7cd386,#90e080,#a2e975,#b4f068)"></div>
<div class="a" style="left:0;top:46px;width:95px;height:12px;background:linear-gradient(90deg,#285b82,#347884,#419384,#50a783,#60b87f,#71c87a,#82d672,#93e166,#a4ea58);-webkit-mask-image:linear-gradient(to bottom,transparent,#000);mask-image:linear-gradient(to bottom,transparent,#000)"></div>
<div class="a" style="left:0;top:58px;width:95px;height:12px;background:linear-gradient(90deg,#285b82,#347884,#419384,#50a783,#60b87f,#71c87a,#82d672,#93e166,#a4ea58)"></div>
<div class="a" style="left:0;top:58px;width:95px;height:12px;background:linear-gradient(90deg,#264c7c,#2f647a,#3a7c78,#489577,#58ac74,#66be6d,#74cc64,#84d858,#94e44c);-webkit-mask-image:linear-gradient(to bottom,transparent,#000);mask-image:linear-gradient(to bottom,transparent,#000)"></div>
<div class="a" style="left:0;top:70px;width:95px;height:11px;background:linear-gradient(90deg,#264c7c,#2f647a,#3a7c78,#489577,#58ac74,#66be6d,#74cc64,#84d858,#94e44c)"></div>
<div class="a" style="left:0;top:70px;width:95px;height:11px;background:linear-gradient(90deg,#253d75,#2d5572,#366d70,#44896c,#52a368,#5db460,#6ac258,#78d150,#88e048);-webkit-mask-image:linear-gradient(to bottom,transparent,#000);mask-image:linear-gradient(to bottom,transparent,#000)"></div>
<div class="a" style="left:0;top:81px;width:95px;height:12px;background:linear-gradient(90deg,#253d75,#2d5572,#366d70,#44896c,#52a368,#5db460,#6ac258,#78d150,#88e048)"></div>
<div class="a" style="left:0;top:81px;width:95px;height:12px;background:linear-gradient(90deg,#242e6e,#2c466b,#346068,#407e63,#4c9a5c,#56aa54,#60b84c,#6eca49,#7cdc48);-webkit-mask-image:linear-gradient(to bottom,transparent,#000);mask-image:linear-gradient(to bottom,transparent,#000)"></div>
<svg style="left:0;top:0" width="95" height="93" viewBox="0 0 925 905"><g opacity="0.5" fill="none" stroke="#3f947c" stroke-width="9" stroke-linecap="round" mask="url(#tmask)"><path d="M400.8 280.6C400.8 282.9 401.0 288.4 400.8 294.6C400.6 300.8 399.1 309.9 399.8 318.0C400.4 326.1 403.6 334.0 404.7 343.0C405.8 352.0 407.6 362.0 406.6 372.0C405.6 382.0 401.8 393.2 398.9 403.0C396.0 412.8 393.9 422.1 389.0 430.6C384.1 439.1 374.5 446.9 369.7 454.0C364.9 461.1 361.9 467.2 360.0 473.0C358.1 478.8 357.5 482.3 358.0 489.0C358.5 495.7 360.9 506.0 362.8 513.0C364.7 520.0 368.3 528.0 369.4 531.0" stroke="url(#tg0)"/><path d="M393.0 276.7C393.0 279.0 392.2 284.5 393.0 290.7C393.8 296.9 398.6 306.3 397.9 314.0C397.2 321.7 391.5 328.2 389.0 337.0C386.5 345.8 383.7 356.7 383.0 366.5C382.3 376.3 383.3 385.9 385.0 395.6C386.7 405.3 390.0 415.1 393.0 424.8C396.0 434.5 399.9 444.0 402.8 454.0C405.7 464.0 410.5 477.0 410.5 485.0C410.5 493.0 405.9 495.4 402.8 502.0C399.7 508.6 395.0 515.2 391.7 524.5C388.4 533.8 383.9 545.1 382.8 558.0C381.7 570.9 383.9 587.2 385.0 602.0C386.1 616.8 388.7 639.3 389.4 646.8" stroke="url(#tg1)"/><path d="M411.0 280.0C411.0 282.3 410.7 284.2 411.0 294.0C411.3 303.8 412.0 323.2 413.0 339.0C414.0 354.8 416.7 370.7 417.0 389.0C417.3 407.3 414.4 435.7 415.0 449.0C415.6 462.3 421.4 460.2 420.5 469.0C419.6 477.8 412.0 490.9 409.4 502.0C406.8 513.1 405.4 524.5 405.0 535.7C404.6 546.9 408.2 558.0 407.0 569.0C405.8 580.0 400.6 592.8 398.0 602.0C395.4 611.2 392.8 620.8 391.7 624.5" stroke="url(#tg2)"/><path d="M426.0 282.5C426.0 284.8 425.7 287.4 426.0 296.5C426.3 305.6 428.3 323.8 428.0 337.0C427.7 350.2 425.0 363.0 424.0 376.0C423.0 389.0 422.7 402.0 422.0 415.0C421.3 428.0 419.7 444.3 420.0 454.0C420.3 463.7 422.0 467.2 424.0 473.0C426.0 478.8 428.5 484.2 432.0 489.0C435.5 493.8 440.7 494.2 445.0 502.0C449.3 509.8 453.6 525.7 458.0 535.7C462.4 545.7 466.5 552.4 471.7 562.0C476.9 571.6 484.6 584.8 489.4 593.4C494.2 602.0 498.6 610.1 500.5 613.4" stroke="url(#tg3)"/><path d="M441.6 284.4C441.6 286.7 441.9 289.6 441.6 298.4C441.3 307.2 439.7 324.1 439.7 337.0C439.7 349.9 440.0 363.0 441.6 376.0C443.2 389.0 447.4 402.0 449.4 415.0C451.3 428.0 453.0 441.7 453.3 454.0C453.6 466.3 453.1 479.2 451.0 489.0C448.9 498.8 444.1 503.4 440.5 513.0C436.9 522.6 429.4 535.6 429.4 546.8C429.4 558.0 440.1 567.0 440.5 580.0C440.9 593.0 433.2 617.1 431.7 624.5" stroke="url(#tg4)"/><path d="M449.4 284.4C449.4 286.7 449.4 289.6 449.4 298.4C449.4 307.2 449.1 324.1 449.4 337.0C449.7 349.9 450.8 363.0 451.4 376.0C452.0 389.0 451.7 402.0 453.3 415.0C454.9 428.0 458.4 441.7 461.0 454.0C463.6 466.3 469.1 479.2 469.0 489.0C468.9 498.8 461.5 501.5 460.5 513.0C459.5 524.5 462.8 543.2 462.8 558.0C462.8 572.8 461.2 589.0 460.5 602.0C459.8 615.0 458.7 630.1 458.3 635.7" stroke="url(#tg5)"/><path d="M472.7 286.4C472.7 288.7 472.4 293.5 472.7 300.4C473.0 307.3 473.4 318.2 474.7 327.6C476.0 337.0 478.6 346.8 480.5 356.8C482.4 366.9 484.8 378.2 486.4 387.9C488.0 397.6 489.9 405.6 490.2 415.0C490.5 424.4 489.9 434.3 488.3 444.0C486.7 453.7 482.6 463.7 480.5 473.4C478.4 483.1 478.9 491.6 476.0 502.0C473.1 512.4 466.5 524.5 462.8 535.7C459.1 546.9 456.9 558.0 453.9 569.0C450.9 580.0 448.0 590.9 445.0 602.0C442.0 613.1 437.5 630.1 436.0 635.7" stroke="url(#tg6)"/><path d="M461.0 286.4C461.0 288.7 460.3 292.0 461.0 300.4C461.7 308.8 463.1 326.0 465.0 337.0C466.9 348.0 469.8 356.7 472.7 366.5C475.6 376.3 479.2 385.9 482.5 395.6C485.8 405.3 489.3 415.1 492.2 424.8C495.1 434.5 496.8 443.3 500.0 454.0C503.2 464.7 508.6 475.4 511.6 489.0C514.6 502.6 518.3 522.4 518.3 535.7C518.3 549.0 514.3 558.0 511.7 569.0C509.1 580.0 505.8 590.9 502.8 602.0C499.8 613.1 496.9 624.5 493.9 635.7C490.9 646.9 486.5 663.5 485.0 669.0" stroke="url(#tg7)"/><path d="M492.2 286.4C492.2 288.7 491.6 293.5 492.2 300.4C492.8 307.3 493.7 318.2 496.0 327.6C498.3 337.0 502.5 347.1 505.8 356.8C509.0 366.5 512.6 376.3 515.5 386.0C518.4 395.7 520.7 405.3 523.3 415.0C525.9 424.7 528.4 434.3 531.0 444.0C533.6 453.7 538.1 463.7 538.8 473.4C539.5 483.1 535.1 491.6 535.0 502.0C534.9 512.4 534.8 524.5 538.3 535.7C541.8 546.9 550.1 558.6 556.0 569.0C561.9 579.4 568.7 589.5 573.9 598.0C579.1 606.5 584.8 616.3 587.0 620.0" stroke="url(#tg8)"/><path d="M515.5 286.4C515.5 288.7 515.2 293.5 515.5 300.4C515.8 307.3 515.9 318.9 517.5 327.6C519.1 336.4 522.0 344.8 525.2 352.9C528.4 361.0 533.0 367.2 536.9 376.0C540.8 384.8 544.1 395.6 548.6 405.4C553.1 415.1 559.5 424.8 564.0 434.5C568.5 444.2 572.7 452.5 575.8 463.7C578.9 475.0 580.1 490.0 582.8 502.0C585.4 514.0 588.0 525.7 591.7 535.7C595.4 545.7 601.7 555.0 605.0 562.0C608.3 569.0 610.6 575.3 611.7 578.0" stroke="url(#tg9)"/><path d="M554.4 284.4C554.4 286.7 554.7 291.2 554.4 298.4C554.1 305.6 554.1 317.9 552.5 327.6C550.9 337.3 547.3 348.1 544.7 356.8C542.1 365.5 538.5 371.9 536.9 380.0C535.3 388.1 533.7 397.0 535.0 405.4C536.3 413.8 540.8 422.5 544.7 430.6C548.6 438.7 554.1 444.3 558.3 454.0C562.5 463.7 568.5 477.2 570.0 489.0C571.5 500.8 569.0 513.0 567.0 524.5C565.0 536.0 561.3 548.0 558.0 558.0C554.7 568.0 550.7 575.7 547.0 584.5C543.3 593.3 537.8 606.6 536.0 611.0" stroke="url(#tg10)"/><path d="M527.2 286.4C527.2 288.7 526.9 292.0 527.2 300.4C527.5 308.8 528.5 326.0 529.1 337.0C529.7 348.0 530.4 356.7 531.0 366.5C531.6 376.3 533.6 385.9 533.0 395.6C532.4 405.3 528.8 415.1 527.2 424.8C525.6 434.5 524.5 443.3 523.3 454.0C522.1 464.7 521.7 476.5 520.0 489.0C518.3 501.5 516.3 514.0 513.0 529.0C509.7 544.0 502.2 570.7 500.0 579.0" stroke="url(#tg11)"/><path d="M578.3 513.4C576.8 518.2 573.1 532.7 569.4 542.0C565.7 551.3 560.1 560.8 556.0 569.0C551.9 577.2 546.8 587.3 545.0 591.0" stroke="url(#tg12)"/></g><path d="M474.0 117.0C483.5 117.2 497.9 117.6 508.7 119.0C519.5 120.4 529.6 122.6 539.0 125.5C548.4 128.4 557.3 132.6 565.0 136.5C572.7 140.4 579.7 144.8 585.0 149.0C590.3 153.2 593.5 157.0 597.0 162.0C600.5 167.0 603.5 172.3 606.0 179.0C608.5 185.7 610.7 194.2 612.0 202.0C613.3 209.8 614.0 218.8 614.0 226.0C614.0 233.2 613.2 238.8 612.0 245.0C610.8 251.2 609.3 256.9 606.5 263.0C603.7 269.1 601.1 276.2 595.0 281.5C588.9 286.8 580.8 291.6 569.8 294.6C558.8 297.6 544.3 298.6 529.0 299.6C513.7 300.6 495.0 301.4 478.0 300.7C461.0 300.0 445.7 298.7 427.0 295.6C408.3 292.5 379.6 286.2 366.0 282.3C352.4 278.4 351.3 276.8 345.7 272.0C340.1 267.2 335.1 260.6 332.5 253.8C329.9 247.0 330.5 237.8 330.3 231.0C330.1 224.2 330.2 218.7 331.1 213.0C332.0 207.3 333.1 202.2 335.5 196.8C337.9 191.4 341.6 186.6 345.7 180.5C349.8 174.4 354.9 166.3 360.0 160.0C365.1 153.7 369.5 147.9 376.3 142.8C383.1 137.7 392.2 133.1 400.7 129.5C409.2 125.9 418.7 123.4 427.2 121.4C435.7 119.4 443.9 118.4 451.7 117.7C459.5 117.0 464.5 116.8 474.0 117.0Z" fill="#00e5ff"/></svg>
</div>
<div class="cb" style="left:1642px;top:193px;width:107px;height:21px;"></div>
<div class="t" style="left:1646px;top:197px;letter-spacing:0;letter-spacing:-0.646px;">45,2%</div>
<svg style="left:1734px;top:201px;" width="8" height="5" viewBox="0 0 8 5"><path d="M0 0 H8 L4 4.5Z" fill="#9a9a9a"/></svg>
<div class="a" style="left:1752px;top:202px;width:142px;height:3px;background:#383838;border-radius:2px"></div>
<div class="a" style="left:1752px;top:202px;width:34px;height:3px;background:#5a82aa;border-radius:2px"></div>
<div class="a" style="left:1784px;top:198px;width:12px;height:12px;background:#4e4e4e;border:1px solid #383838;border-radius:2px"></div>
<svg style="left:1898px;top:197px;" width="17" height="15" viewBox="0 0 17 15"><rect x="0.7" y="0.7" width="15.6" height="10" fill="none" stroke="#d4d4d4" stroke-width="1.3"/><path d="M8.5 10.7 V13.8 M4 14.2 H13" stroke="#d4d4d4" stroke-width="1.3"/><rect x="7.5" y="4.8" width="2" height="2" fill="#d4d4d4"/></svg>
<div class="a" style="left:1643px;top:219px;width:20px;height:20px;border-radius:50%;background:#2e2e2e;"></div>
<svg style="left:1643px;top:219px;" width="20" height="20" viewBox="0 0 20 20"><path d="M10.0 10.0 H21" stroke="#e0e0e0" stroke-width="1.2"/><circle cx="10.0" cy="10.0" r="1.3" fill="#e0e0e0"/><path d="M22.5 10.0 L19.5 7.8 V12.2Z" fill="#e0e0e0"/></svg>
<div class="in" style="left:1668px;top:218px;width:56px;height:21px;border-radius:2px 0 0 2px"></div>
<div class="t" style="left:1672px;top:222px;letter-spacing:0;letter-spacing:-0.831px;">0,00°</div>
<div class="a" style="left:1724px;top:218px;width:13px;height:21px;background:#3e3e3e;border:1px solid #353535;border-left:none;border-radius:0 3px 3px 0"></div>
<svg style="left:1724px;top:218px;" width="13" height="21" viewBox="0 0 13 21"><path d="M3.0 7.5 H10.0 L6.5 3.5Z M3.0 13.5 H10.0 L6.5 17.5Z" fill="#6f6f6f"/></svg>
<svg style="left:1809px;top:221px;" width="15" height="16" viewBox="0 0 15 16"><path d="M7.5 0 V16" stroke="#d4d4d4" stroke-width="1.6"/><path d="M5 2.7 H0.8 V13.3 H5 M10 2.7 H14.2 V13.3 H10" fill="none" stroke="#d4d4d4" stroke-width="1.5"/></svg>
<div class="cb" style="left:1894px;top:217px;width:24px;height:24px;"></div>
<svg style="left:1899px;top:221px;" width="15" height="16" viewBox="0 0 16 16"><path class="f" d="M9.5 0.5 L15.5 6.5 L14 7.2 L12.5 6.8 L10 9.5 L10.5 12.5 L9.3 13.6 L6 10.3 L1 15.5 L0.5 15 L5.7 10 L2.4 6.7 L3.5 5.5 L6.5 6 L9.2 3.5 L8.8 2Z"/></svg>
<div class="a" style="left:1773px;top:245px;width:2px;height:2px;background:#7a7a7a;opacity:.8"></div>
<div class="a" style="left:1776px;top:245px;width:2px;height:2px;background:#7a7a7a;opacity:.8"></div>
<div class="a" style="left:1779px;top:245px;width:2px;height:2px;background:#7a7a7a;opacity:.8"></div>
<div class="a" style="left:1782px;top:245px;width:2px;height:2px;background:#7a7a7a;opacity:.8"></div>
<div class="a" style="left:1785px;top:245px;width:2px;height:2px;background:#7a7a7a;opacity:.8"></div>
<div class="a" style="left:1788px;top:245px;width:2px;height:2px;background:#7a7a7a;opacity:.8"></div>
<div class="a" style="left:1641px;top:249px;width:53px;height:23px;background:#4a4a4a;border:1px solid #5c5c5c;border-bottom:none;border-radius:3px 3px 0 0"></div>
<div class="a" style="left:1696px;top:251px;width:92px;height:21px;background:#444;border:1px solid #555;border-bottom:none;border-radius:3px 3px 0 0"></div>
<div class="a" style="left:1790px;top:251px;width:90px;height:21px;background:#444;border:1px solid #555;border-bottom:none;border-radius:3px 3px 0 0"></div>
<div class="t" style="left:1651px;top:254px;;letter-spacing:-0.955px;">Layers</div>
<div class="t" style="left:1706px;top:255px;;letter-spacing:-0.225px;">Compositions</div>
<div class="t" style="left:1801px;top:255px;;letter-spacing:-0.155px;">Undo History</div>
<svg style="left:1641px;top:273px;" width="17" height="17" viewBox="0 0 17 17"><circle cx="8.5" cy="8.5" r="7.6" fill="none" stroke="#d4d4d4" stroke-width="1.1"/><rect class="f" x="5.2" y="8" width="6.6" height="4.6" rx="0.5"/><path d="M6.3 8 V6.2 A2.2 2.2 0 0 1 10.7 6.2" fill="none" stroke="#d4d4d4" stroke-width="1.1"/></svg>
<div class="t" style="left:1663px;top:275px;font-size:11px;letter-spacing:-0.455px;">Layers</div>
<svg style="left:1881px;top:275px;" width="14" height="14" viewBox="0 0 14 14"><path d="M4.5 4 V0.7 H13.3 V9 H9.5" fill="none" stroke="#d4d4d4" stroke-width="1.3"/><rect x="0.7" y="4.6" width="8.6" height="8.6" fill="none" stroke="#d4d4d4" stroke-width="1.3"/></svg>
<svg style="left:1905px;top:276px;" width="11" height="11" viewBox="0 0 11 11"><path d="M0.5 0.5 L10.5 10.5 M10.5 0.5 L0.5 10.5" stroke="#d4d4d4" stroke-width="1.4" fill="none"/></svg>
<div class="cb" style="left:1641px;top:292px;width:245px;height:29px;"></div>
<div class="t" style="left:1645px;top:300px;;letter-spacing:-0.362px;">Normal</div>
<svg style="left:1870px;top:304px;" width="8" height="5" viewBox="0 0 8 5"><path d="M0 0 H8 L4 4.5Z" fill="#9a9a9a"/></svg>
<svg style="left:1895px;top:297px;" width="18" height="19" viewBox="0 0 18 19"><path d="M0.8 0.8 H16.2 L10.3 8.5 V16.5 L6.7 14 V8.5Z" fill="none" stroke="#d4d4d4" stroke-width="1.4"/></svg>
<svg style="left:1911px;top:315px;" width="6" height="4" viewBox="0 0 6 4"><path d="M0 0 H6 L3 3.5Z" fill="#8a8a8a"/></svg>
<div class="a" style="left:1641px;top:325px;width:231px;height:28px;background:#54789c;border-radius:2px 0 0 2px"></div>
<div class="t" style="left:1641px;top:333px;width:231px;text-align:center;color:#eee;letter-spacing:0;letter-spacing:-0.491px;">Opacity:&nbsp; 100%</div>
<div class="a" style="left:1872px;top:325px;width:14px;height:28px;background:#3e3e3e;border:1px solid #353535;border-left:none;border-radius:0 3px 3px 0"></div>
<svg style="left:1872px;top:325px;" width="14" height="28" viewBox="0 0 14 28"><path d="M3.5 11.0 H10.5 L7.0 7.0Z M3.5 17.0 H10.5 L7.0 21.0Z" fill="#6f6f6f"/></svg>
<svg style="left:1897px;top:334px;" width="13" height="12" viewBox="0 0 13 12"><path d="M0 1.5 H13 M0 6 H13 M0 10.5 H13" stroke="#d4d4d4" stroke-width="1.8"/></svg>
<svg style="left:1911px;top:348px;" width="6" height="4" viewBox="0 0 6 4"><path d="M0 0 H6 L3 3.5Z" fill="#8a8a8a"/></svg>
<div class="a" style="left:1641px;top:354px;width:278px;height:361px;background:#383838;"></div>
<div class="a" style="left:1685px;top:357px;width:234px;height:27px;background:#54789c;"></div>
<svg style="left:1645px;top:363px;" width="15" height="14" viewBox="0 0 15 14"><path d="M0.6 7.5 C3 2 12 2 14.4 7.5" fill="none" stroke="#d4d4d4" stroke-width="1.3"/><path d="M0.8 9 C3.5 14.5 11.5 14.5 14.2 9" fill="none" stroke="#d4d4d4" stroke-width="1.2"/><circle cx="7.5" cy="6.8" r="3.6" fill="#d4d4d4"/><circle cx="8.8" cy="5.6" r="1.2" fill="#383838"/></svg>
<div class="a" style="left:1667px;top:364px;width:14px;height:14px;background:#333;"></div>
<svg style="left:1668px;top:365px;" width="12" height="12" viewBox="0 0 12 12"><path d="M2 6 L5 10 L10.5 1.5" fill="none" stroke="#d4d4d4" stroke-width="1.5"/></svg>
<svg style="left:1716px;top:359px;" width="11" height="11" viewBox="0 0 11 11"><rect x="2.6" y="0.6" width="7.8" height="7.8" fill="none" stroke="#d4d4d4" stroke-width="1"/><path d="M0.5 2 L5.5 6.5 M5.8 3.2 V6.8 H2.2" fill="none" stroke="#d4d4d4" stroke-width="1"/></svg>
<div class="t" style="left:1729px;top:364px;color:#f0f0f0;letter-spacing:-0.363px;">Paint Layer 2</div>
<svg style="left:1863px;top:364px;" width="13" height="13" viewBox="0 0 13 13"><g opacity="0.55"><rect x="0.5" y="6" width="11" height="7" rx="1" fill="#9a9a9a"/><path d="M6 6 V4 A2.6 2.6 0 0 1 11.2 4 V5" fill="none" stroke="#9a9a9a" stroke-width="1.4"/></g></svg>
<div class="t" style="left:1880px;top:360px;font-size:19px;line-height:20px;font-family:'DejaVu Sans',sans-serif;color:#999;opacity:0.55;letter-spacing:0;">α</div>
<div class="a" style="left:1900px;top:363px;width:16px;height:16px;opacity:0.55;background:conic-gradient(#8a8a8a 25%,#555 0 50%,#8a8a8a 0 75%,#555 0);background-size:8px 8px;filter:blur(.6px)"></div>
<svg style="left:1645px;top:390px;" width="15" height="14" viewBox="0 0 15 14"><path d="M0.6 7.5 C3 2 12 2 14.4 7.5" fill="none" stroke="#d4d4d4" stroke-width="1.3"/><path d="M0.8 9 C3.5 14.5 11.5 14.5 14.2 9" fill="none" stroke="#d4d4d4" stroke-width="1.2"/><circle cx="7.5" cy="6.8" r="3.6" fill="#d4d4d4"/><circle cx="8.8" cy="5.6" r="1.2" fill="#383838"/></svg>
<div class="a" style="left:1667px;top:391px;width:14px;height:14px;background:#333;"></div>
<svg style="left:1716px;top:386px;" width="11" height="11" viewBox="0 0 11 11"><rect x="2.6" y="0.6" width="7.8" height="7.8" fill="none" stroke="#d4d4d4" stroke-width="1"/><path d="M0.5 2 L5.5 6.5 M5.8 3.2 V6.8 H2.2" fill="none" stroke="#d4d4d4" stroke-width="1"/></svg>
<div class="t" style="left:1729px;top:391px;;letter-spacing:-0.625px;">Paint Layer 1</div>
<svg style="left:1863px;top:391px;" width="13" height="13" viewBox="0 0 13 13"><g opacity="0.42"><rect x="0.5" y="6" width="11" height="7" rx="1" fill="#9a9a9a"/><path d="M6 6 V4 A2.6 2.6 0 0 1 11.2 4 V5" fill="none" stroke="#9a9a9a" stroke-width="1.4"/></g></svg>
<div class="t" style="left:1880px;top:387px;font-size:19px;line-height:20px;font-family:'DejaVu Sans',sans-serif;color:#999;opacity:0.42;letter-spacing:0;">α</div>
<div class="a" style="left:1900px;top:390px;width:16px;height:16px;opacity:0.42;background:conic-gradient(#8a8a8a 25%,#555 0 50%,#8a8a8a 0 75%,#555 0);background-size:8px 8px;filter:blur(.6px)"></div>
<svg style="left:1645px;top:417px;" width="15" height="14" viewBox="0 0 15 14"><path d="M0.6 7.5 C3 2 12 2 14.4 7.5" fill="none" stroke="#d4d4d4" stroke-width="1.3"/><path d="M0.8 9 C3.5 14.5 11.5 14.5 14.2 9" fill="none" stroke="#d4d4d4" stroke-width="1.2"/><circle cx="7.5" cy="6.8" r="3.6" fill="#d4d4d4"/><circle cx="8.8" cy="5.6" r="1.2" fill="#383838"/></svg>
<div class="a" style="left:1667px;top:418px;width:14px;height:14px;background:#333;"></div>
<svg style="left:1716px;top:413px;" width="11" height="11" viewBox="0 0 11 11"><rect x="2.6" y="0.6" width="7.8" height="7.8" fill="none" stroke="#d4d4d4" stroke-width="1"/><path d="M0.5 2 L5.5 6.5 M5.8 3.2 V6.8 H2.2" fill="none" stroke="#d4d4d4" stroke-width="1"/></svg>
<div class="t" style="left:1729px;top:418px;;letter-spacing:-0.165px;">Background</div>
<svg style="left:1863px;top:418px;" width="13" height="13" viewBox="0 0 13 13"><g opacity="0.42"><rect x="0.5" y="6" width="11" height="7" rx="1" fill="#9a9a9a"/><path d="M6 6 V4 A2.6 2.6 0 0 1 11.2 4 V5" fill="none" stroke="#9a9a9a" stroke-width="1.4"/></g></svg>
<div class="t" style="left:1880px;top:414px;font-size:19px;line-height:20px;font-family:'DejaVu Sans',sans-serif;color:#999;opacity:0.42;letter-spacing:0;">α</div>
<div class="a" style="left:1900px;top:417px;width:16px;height:16px;opacity:0.42;background:conic-gradient(#8a8a8a 25%,#555 0 50%,#8a8a8a 0 75%,#555 0);background-size:8px 8px;filter:blur(.6px)"></div>
<div class="a" style="left:1689px;top:363px;width:21px;height:14px;background:#fff;"><div class="a" style="left:1px;top:1.5px;width:19px;height:11.5px;background:#00e5ff;border-radius:8px 8px 3px 3px/7px 7px 3px 3px"></div></div>
<div class="a" style="left:1694px;top:388px;width:10px;height:20px;background:#fff;"><div class="a" style="left:2px;top:2px;width:6px;height:5px;background:#30d8e0;border-radius:3px 3px 1px 1px"></div><div class="a" style="left:2px;top:7px;width:6px;height:10px;background:repeating-linear-gradient(90deg,#4a9a80 0 1px,#d8f0e8 1px 2px);opacity:.9"></div></div>
<div class="a" style="left:1693px;top:415px;width:11px;height:20px;overflow:hidden">
<div class="a" style="left:0;top:0px;width:11px;height:10px;background:linear-gradient(90deg,#70e8d8,#f8ffc8)"></div>
<div class="a" style="left:0;top:0px;width:11px;height:10px;background:linear-gradient(90deg,#208898,#b0e868);-webkit-mask-image:linear-gradient(to bottom,transparent,#000);mask-image:linear-gradient(to bottom,transparent,#000)"></div>
<div class="a" style="left:0;top:10px;width:11px;height:10px;background:linear-gradient(90deg,#208898,#b0e868)"></div>
<div class="a" style="left:0;top:10px;width:11px;height:10px;background:linear-gradient(90deg,#10085c,#3a7038);-webkit-mask-image:linear-gradient(to bottom,transparent,#000);mask-image:linear-gradient(to bottom,transparent,#000)"></div>
</div>
<svg style="left:1646px;top:721px;" width="18" height="18" viewBox="0 0 18 18"><path d="M9 0 V18 M0 9 H18" stroke="#d4d4d4" stroke-width="1.6"/></svg>
<svg style="left:1672px;top:728px;" width="8" height="5" viewBox="0 0 8 5"><path d="M0 0 H8 L4 4.5Z" fill="#9a9a9a"/></svg>
<svg style="left:1689px;top:720px;" width="21" height="21" viewBox="0 0 21 21"><rect x="3.8" y="0.8" width="16.4" height="16.4" fill="none" stroke="#d4d4d4" stroke-width="1.5"/><path d="M0.8 4 V20.2 H17" fill="none" stroke="#d4d4d4" stroke-width="1.5"/></svg>
<svg style="left:1721px;top:724px;" width="20" height="11" viewBox="0 0 20 11"><path d="M0.8 0.8 L10 10 L19.2 0.8" fill="none" stroke="#d4d4d4" stroke-width="1.6"/></svg>
<svg style="left:1753px;top:724px;" width="20" height="11" viewBox="0 0 20 11"><path d="M0.8 10.2 L10 1 L19.2 10.2" fill="none" stroke="#d4d4d4" stroke-width="1.6"/></svg>
<svg style="left:1785px;top:722px;" width="20" height="16" viewBox="0 0 20 16"><path d="M0 2 H20 M0 8 H20 M0 14 H20" stroke="#d4d4d4" stroke-width="1.5"/><path d="M14 0 V4 M5 6 V10 M11 12 V16" stroke="#d4d4d4" stroke-width="2.2"/></svg>
<svg style="left:1812px;top:728px;" width="8" height="5" viewBox="0 0 8 5"><path d="M0 0 H8 L4 4.5Z" fill="#9a9a9a"/></svg>
<svg style="left:1896px;top:720px;" width="17" height="20" viewBox="0 0 17 20"><path class="f" d="M0.5 3.5 H16.5 V5.5 H0.5Z M5.5 1 H11.5 V3.5 H5.5Z M2 7 H15 V18 Q15 20 13 20 H4 Q2 20 2 18Z"/></svg>
<div class="a" style="left:1773px;top:748px;width:2px;height:2px;background:#7a7a7a;opacity:.8"></div>
<div class="a" style="left:1776px;top:748px;width:2px;height:2px;background:#7a7a7a;opacity:.8"></div>
<div class="a" style="left:1779px;top:748px;width:2px;height:2px;background:#7a7a7a;opacity:.8"></div>
<div class="a" style="left:1782px;top:748px;width:2px;height:2px;background:#7a7a7a;opacity:.8"></div>
<div class="a" style="left:1785px;top:748px;width:2px;height:2px;background:#7a7a7a;opacity:.8"></div>
<div class="a" style="left:1788px;top:748px;width:2px;height:2px;background:#7a7a7a;opacity:.8"></div>
<svg style="left:1641px;top:752px;" width="17" height="17" viewBox="0 0 17 17"><circle cx="8.5" cy="8.5" r="7.6" fill="none" stroke="#d4d4d4" stroke-width="1.1"/><rect class="f" x="5.2" y="8" width="6.6" height="4.6" rx="0.5"/><path d="M6.3 8 V6.2 A2.2 2.2 0 0 1 10.7 6.2" fill="none" stroke="#d4d4d4" stroke-width="1.1"/></svg>
<div class="t" style="left:1663px;top:754px;font-size:11px;letter-spacing:0.345px;">Tool Options</div>
<svg style="left:1881px;top:754px;" width="14" height="14" viewBox="0 0 14 14"><path d="M4.5 4 V0.7 H13.3 V9 H9.5" fill="none" stroke="#d4d4d4" stroke-width="1.3"/><rect x="0.7" y="4.6" width="8.6" height="8.6" fill="none" stroke="#d4d4d4" stroke-width="1.3"/></svg>
<svg style="left:1905px;top:755px;" width="11" height="11" viewBox="0 0 11 11"><path d="M0.5 0.5 L10.5 10.5 M10.5 0.5 L0.5 10.5" stroke="#d4d4d4" stroke-width="1.4" fill="none"/></svg>
<div class="t" style="left:1643px;top:773px;letter-spacing:0;letter-spacing:-0.255px;">Geometry Options</div>
<div class="t" style="left:1643px;top:793px;letter-spacing:0;letter-spacing:-0.334px;">Fill:</div>
<div class="cb" style="left:1687px;top:788px;width:228px;height:20px;"></div>
<div class="t" style="left:1691px;top:792px;letter-spacing:0;letter-spacing:-0.098px;">Foreground Color</div>
<svg style="left:1901px;top:796px;" width="8" height="5" viewBox="0 0 8 5"><path d="M0 0 H8 L4 4.5Z" fill="#9a9a9a"/></svg>
<div class="t" style="left:1643px;top:816px;letter-spacing:0;letter-spacing:-0.045px;">Outline:</div>
<div class="cb" style="left:1687px;top:811px;width:228px;height:20px;"></div>
<div class="t" style="left:1691px;top:815px;letter-spacing:0;letter-spacing:-0.030px;">No Outline</div>
<svg style="left:1901px;top:819px;" width="8" height="5" viewBox="0 0 8 5"><path d="M0 0 H8 L4 4.5Z" fill="#9a9a9a"/></svg>
<div class="t" style="left:1643px;top:835px;color:#6e6e6e;letter-spacing:0;letter-spacing:-0.385px;">Pattern Transform</div>
<div class="a" style="left:1644px;top:852px;width:271px;height:76px;border:1px solid #3f3f3f;border-radius:2px;background:#454545"></div>
<div class="t" style="left:1655px;top:867px;color:#6e6e6e;letter-spacing:0;letter-spacing:-0.358px;">Rotate:</div>
<div class="a" style="left:1700px;top:863px;width:19px;height:19px;border-radius:50%;background:#414141;border:1px solid #555"></div>
<svg style="left:1700px;top:863px;" width="19" height="19" viewBox="0 0 19 19"><path d="M9.5 9.5 H20" stroke="#5a5a5a" stroke-width="1.2"/><circle cx="9.5" cy="9.5" r="1.3" fill="#5a5a5a"/></svg>
<div class="a" style="left:1726px;top:862px;width:136px;height:21px;background:#2f2f2f;border-radius:2px 0 0 2px"></div>
<div class="t" style="left:1729px;top:866px;color:#6a6a6a;letter-spacing:0;letter-spacing:-0.831px;">0,00°</div>
<div class="a" style="left:1862px;top:862px;width:12px;height:21px;background:#3e3e3e;border:1px solid #353535;border-left:none;border-radius:0 3px 3px 0"></div>
<svg style="left:1862px;top:862px;" width="12" height="21" viewBox="0 0 12 21"><path d="M2.5 7.5 H9.5 L6.0 3.5Z M2.5 13.5 H9.5 L6.0 17.5Z" fill="#555"/></svg>
<svg style="left:1886px;top:866px;" width="13" height="12" viewBox="0 0 13 12"><path d="M0 1.5 H13 M0 6 H13 M0 10.5 H13" stroke="#d4d4d4" stroke-width="1.8"/></svg>
<div class="t" style="left:1655px;top:896px;color:#6e6e6e;letter-spacing:0;letter-spacing:-0.927px;">Scale:</div>
<div class="a" style="left:1698px;top:891px;width:191px;height:21px;background:linear-gradient(90deg,#383838 0,#383838 36px,#2f2f2f 36px);border-radius:2px 0 0 2px"></div>
<div class="t" style="left:1698px;top:895px;width:176px;text-align:center;color:#6a6a6a;letter-spacing:0;letter-spacing:-0.882px;">100,00%</div>
<svg style="left:1875px;top:896px;" width="10" height="10" viewBox="0 0 10 10"><circle cx="5" cy="5" r="4" fill="none" stroke="#5c5c5c" stroke-width="1.1"/><circle cx="5" cy="5" r="1.6" fill="#5c5c5c"/></svg>
<div class="a" style="left:1889px;top:891px;width:13px;height:21px;background:#3e3e3e;border:1px solid #353535;border-left:none;border-radius:0 3px 3px 0"></div>
<svg style="left:1889px;top:891px;" width="13" height="21" viewBox="0 0 13 21"><path d="M3.0 7.5 H10.0 L6.5 3.5Z M3.0 13.5 H10.0 L6.5 17.5Z" fill="#555"/></svg>
<div class="t" style="left:1643px;top:932px;letter-spacing:0;letter-spacing:-0.135px;">Path options</div>
<div class="a" style="left:1643px;top:950px;width:14px;height:14px;background:#383838;"></div>
<svg style="left:1644px;top:951px;" width="12" height="12" viewBox="0 0 12 12"><path d="M2 6 L5 10 L10.5 1.5" fill="none" stroke="#d4d4d4" stroke-width="1.5"/></svg>
<div class="t" style="left:1662px;top:951px;;letter-spacing:-0.226px;">Autosmooth curve</div>
<div class="a" style="left:1643px;top:974px;width:14px;height:14px;background:#383838;"></div>
<div class="t" style="left:1662px;top:975px;;letter-spacing:-0.292px;">Activate angle snap</div>
<div class="a" style="left:1655px;top:996px;width:20px;height:20px;border-radius:50%;background:#414141;border:1px solid #555"></div>
<svg style="left:1655px;top:996px;" width="20" height="20" viewBox="0 0 20 20"><path d="M10.0 10.0 H21" stroke="#5a5a5a" stroke-width="1.2"/><circle cx="10.0" cy="10.0" r="1.3" fill="#5a5a5a"/></svg>
<div class="a" style="left:1681px;top:997px;width:200px;height:20px;background:#2f2f2f;border-radius:2px"></div>
<div class="t" style="left:1684px;top:1000px;color:#6a6a6a;letter-spacing:0;">15°</div>
<svg style="left:1897px;top:1000px;" width="13" height="12" viewBox="0 0 13 12"><path d="M0 1.5 H13 M0 6 H13 M0 10.5 H13" stroke="#d4d4d4" stroke-width="1.8"/></svg>
<svg style="left:1705px;top:985px;" width="190" height="62" viewBox="0 0 190 62"><g opacity="0.9">
<path d="M5 5.5 H22 V13 H12 V37.5 H22 V45 H21.7 V58.5 L11.5 45 H5Z" fill="#cc3a5e"/>
<path d="M29.7 5.5 H45.7 V45 H29.7 V37.5 H38.7 V13 H29.7Z" fill="#3a8cc4"/>
<text x="56.5" y="45" font-family="Liberation Sans,sans-serif" font-weight="bold" font-size="56" textLength="125" lengthAdjust="spacingAndGlyphs" fill="#c4c4c4" opacity="0.9">XDA</text></g></svg>
<svg style="left:7px;top:1057px;" width="16" height="16" viewBox="0 0 16 16"><rect x="0.6" y="0.6" width="14.8" height="14.8" fill="none" stroke="#d4d4d4" stroke-width="1.1"/><circle cx="8" cy="8" r="4.2" fill="none" stroke="#d4d4d4" stroke-width="1" stroke-dasharray="1.2 1.2"/></svg>
<div class="t" style="left:36px;top:1059px;;letter-spacing:-0.183px;">j) WaterC Basic Round-Grain</div>
<div class="t" style="left:494px;top:1059px;;letter-spacing:-0.064px;">RGB/Alpha (8-bit integer/channel)&nbsp; sRGB-elle-V2-srgbtrc.icc</div>
<div class="a" style="left:1458px;top:1054px;width:135px;height:23px;background:#424242;border:1px solid #383838;border-radius:2px"></div>
<div class="a" style="left:1460px;top:1057px;width:2px;height:17px;background:#4f6f92;"></div>
<div class="t" style="left:1462px;top:1059px;;letter-spacing:-0.460px;">2 048 <u>x</u> 2 048 (131,0 MiB)</div>
<div class="a" style="left:1601px;top:1055px;width:20px;height:20px;border-radius:50%;background:#2e2e2e;"></div>
<svg style="left:1601px;top:1055px;" width="20" height="20" viewBox="0 0 20 20"><path d="M10.0 10.0 H21" stroke="#e0e0e0" stroke-width="1.2"/><circle cx="10.0" cy="10.0" r="1.3" fill="#e0e0e0"/><path d="M22.5 10.0 L19.5 7.8 V12.2Z" fill="#e0e0e0"/></svg>
<div class="t" style="left:1630px;top:1059px;letter-spacing:0;letter-spacing:-0.831px;">0,00°</div>
<div class="t" style="left:1764px;top:1059px;letter-spacing:0;letter-spacing:-0.646px;">45,2%</div>
<div class="a" style="left:1813px;top:1064px;width:80px;height:3px;background:#383838;border-radius:2px"></div>
<div class="a" style="left:1813px;top:1064px;width:18px;height:3px;background:#5a82aa;border-radius:2px"></div>
<div class="a" style="left:1829px;top:1059px;width:12px;height:12px;background:#4e4e4e;border:1px solid #383838;border-radius:2px"></div>
<svg style="left:1898px;top:1058px;" width="17" height="15" viewBox="0 0 17 15"><rect x="0.7" y="0.7" width="15.6" height="10" fill="none" stroke="#d4d4d4" stroke-width="1.3"/><path d="M8.5 10.7 V13.8 M4 14.2 H13" stroke="#d4d4d4" stroke-width="1.3"/><rect x="7.5" y="4.8" width="2" height="2" fill="#d4d4d4"/></svg>
</body></html>
